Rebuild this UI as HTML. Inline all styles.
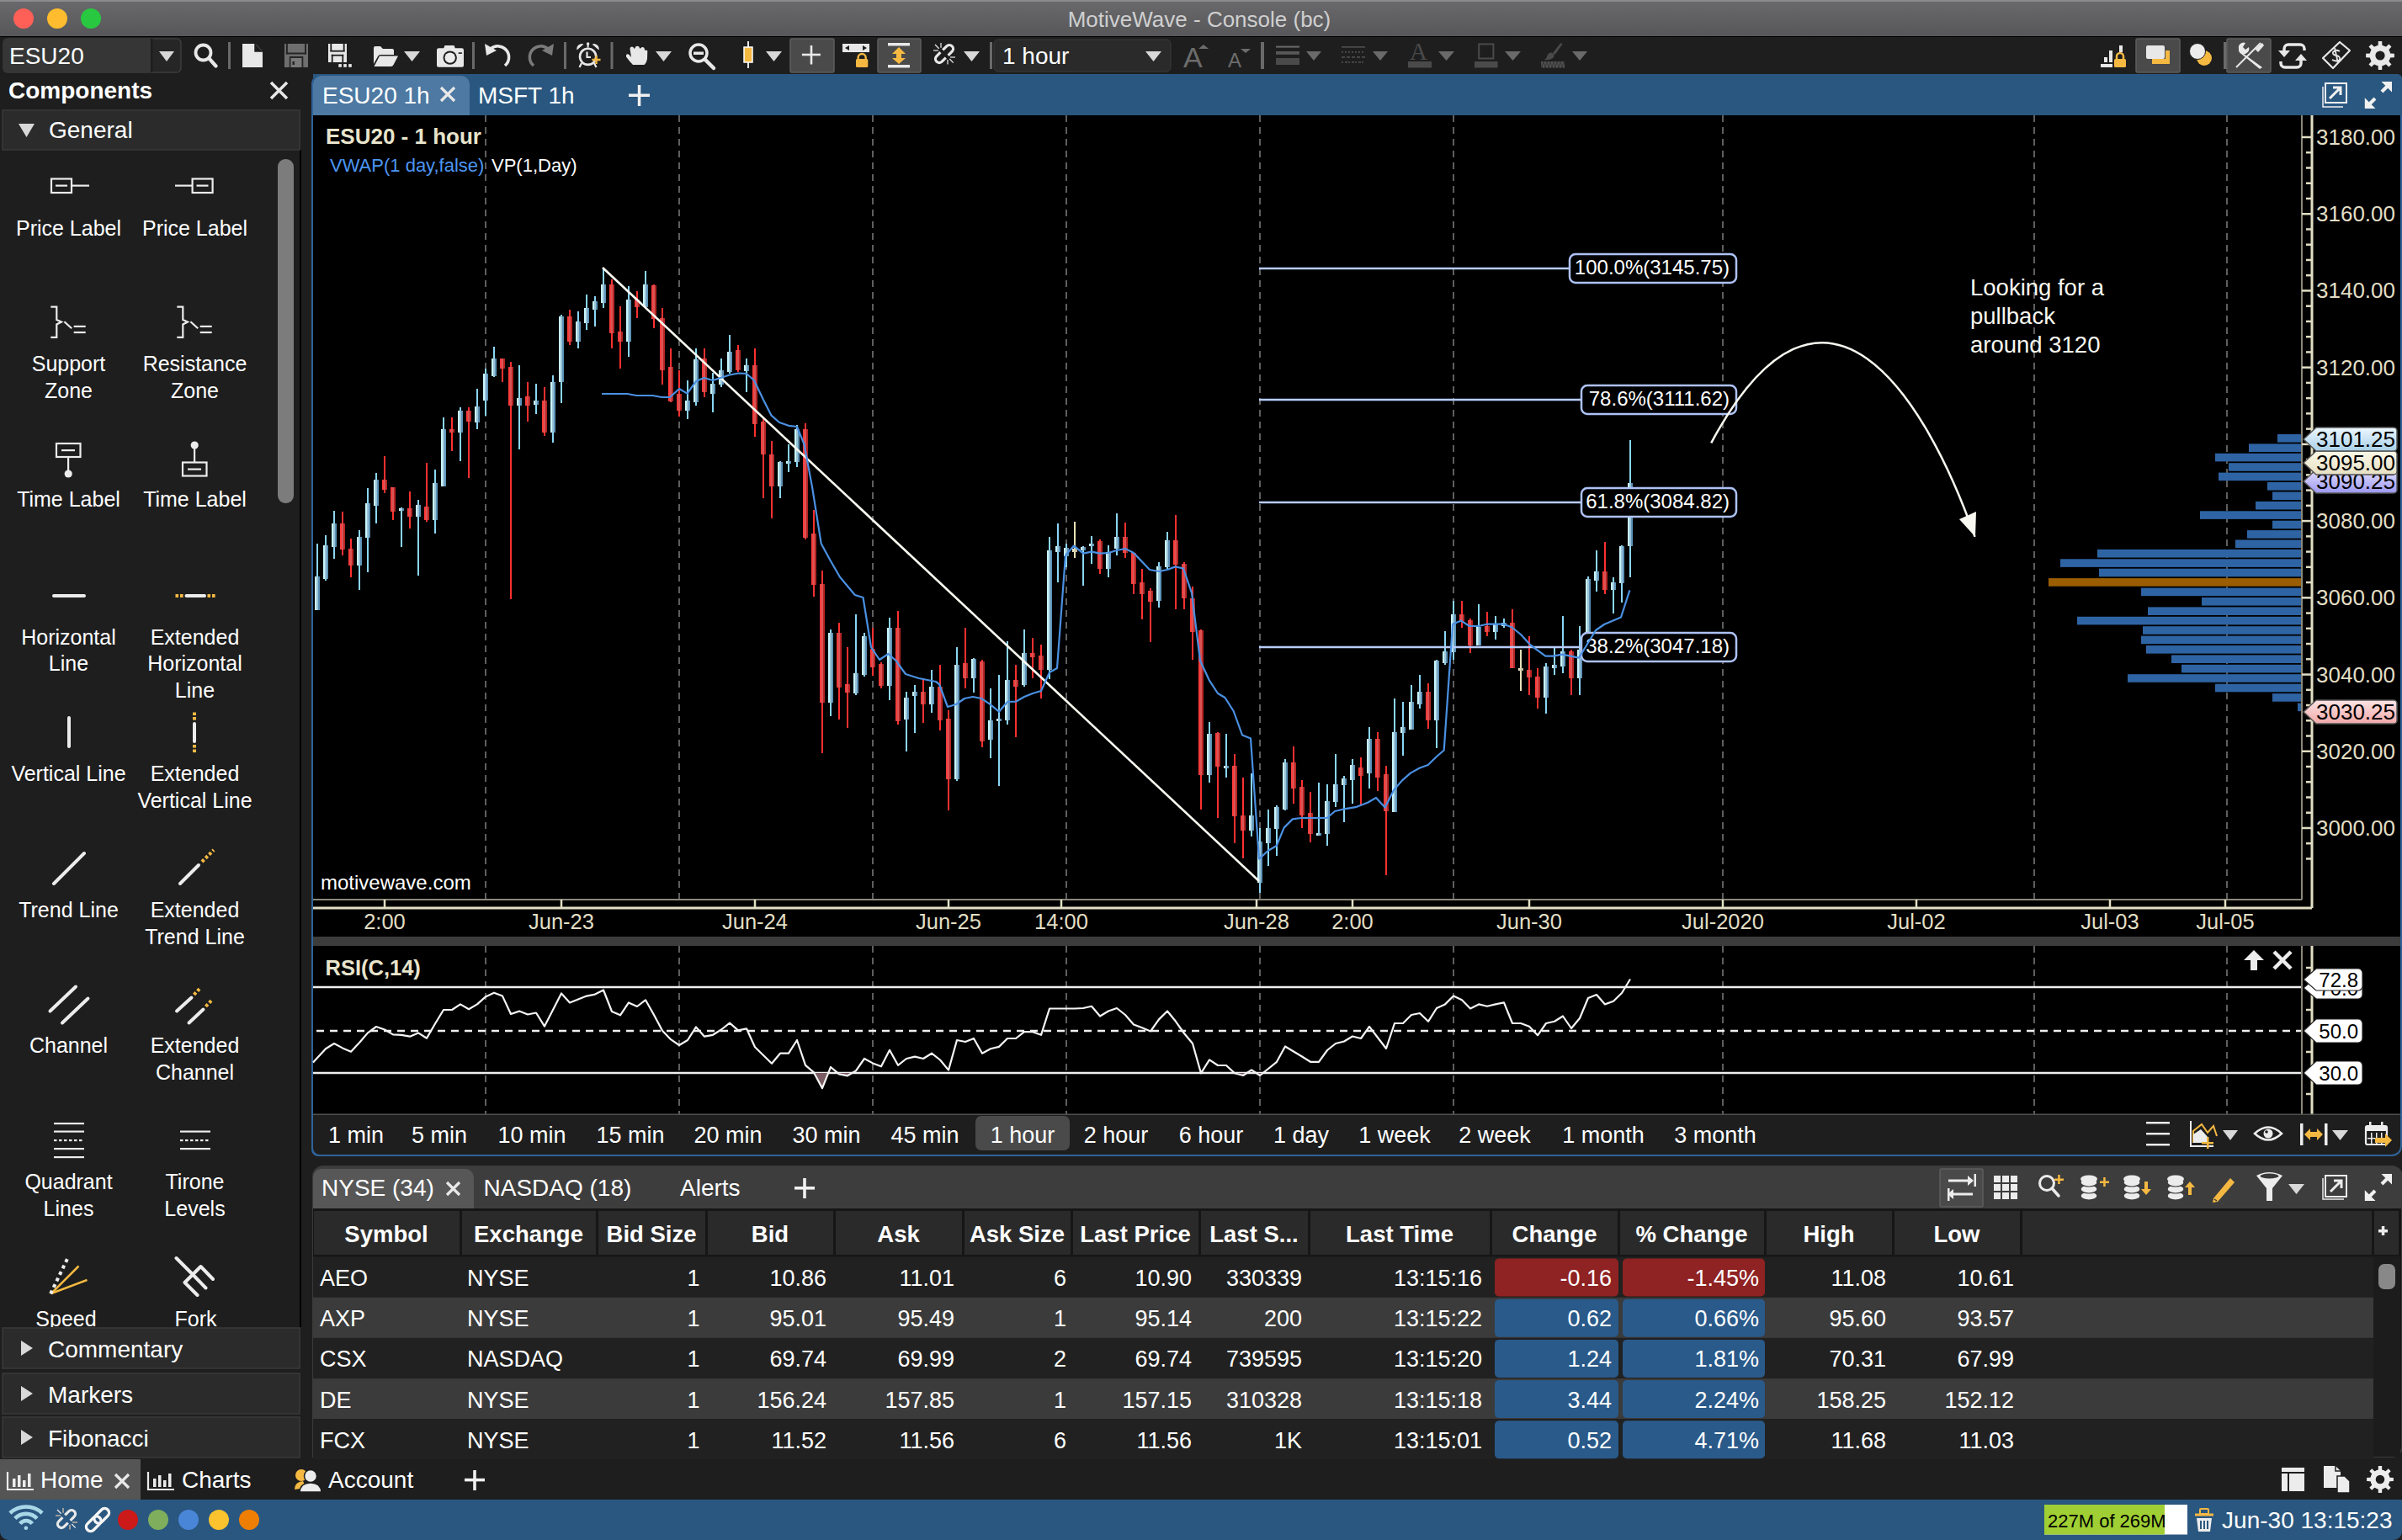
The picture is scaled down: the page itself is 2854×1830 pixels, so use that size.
<!DOCTYPE html><html><head><meta charset="utf-8"><style>html,body{margin:0;padding:0;width:2854px;height:1830px;overflow:hidden;background:#1e1e1e}svg{display:block;font-family:"Liberation Sans",sans-serif}</style></head><body><svg width="2854" height="1830" viewBox="0 0 2854 1830"><defs><linearGradient id="tb" x1="0" y1="0" x2="0" y2="1"><stop offset="0" stop-color="#6a6a6d"/><stop offset="1" stop-color="#57575a"/></linearGradient><linearGradient id="cb" x1="0" y1="0" x2="1" y2="0"><stop offset="0" stop-color="#c8f6ff"/><stop offset="0.34" stop-color="#c8f6ff"/><stop offset="0.34" stop-color="#9cc4d6"/><stop offset="0.66" stop-color="#9cc4d6"/><stop offset="0.66" stop-color="#5c92b8"/><stop offset="1" stop-color="#5c92b8"/></linearGradient><linearGradient id="cr" x1="0" y1="0" x2="1" y2="0"><stop offset="0" stop-color="#ff3c3c"/><stop offset="0.34" stop-color="#ff3c3c"/><stop offset="0.34" stop-color="#d85454"/><stop offset="0.66" stop-color="#d85454"/><stop offset="0.66" stop-color="#b82424"/><stop offset="1" stop-color="#b82424"/></linearGradient><linearGradient id="cy" x1="0" y1="0" x2="1" y2="0"><stop offset="0" stop-color="#f4eed0"/><stop offset="1" stop-color="#b8b090"/></linearGradient><linearGradient id="lb1" x1="0" y1="0" x2="0" y2="1"><stop offset="0" stop-color="#eef8ff"/><stop offset="1" stop-color="#a8d0e8"/></linearGradient><linearGradient id="lb2" x1="0" y1="0" x2="0" y2="1"><stop offset="0" stop-color="#fbf8e8"/><stop offset="1" stop-color="#e6e0c4"/></linearGradient><linearGradient id="lb3" x1="0" y1="0" x2="0" y2="1"><stop offset="0" stop-color="#e4e0ff"/><stop offset="1" stop-color="#9c98f0"/></linearGradient><linearGradient id="lb4" x1="0" y1="0" x2="0" y2="1"><stop offset="0" stop-color="#fde4e4"/><stop offset="1" stop-color="#f0a8a8"/></linearGradient></defs>
<rect x="0" y="0" width="2854" height="1830" fill="#1e1e1e" rx="0" />
<rect x="0" y="0" width="2854" height="43" fill="url(#tb)" rx="0" />
<rect x="0" y="0" width="2854" height="2" fill="#8c8c8f" rx="0" />
<rect x="0" y="43" width="2854" height="1" fill="#000" rx="0" />
<circle cx="28" cy="22" r="12" fill="#fe5f57"/>
<circle cx="68" cy="22" r="12" fill="#febc2e"/>
<circle cx="108" cy="22" r="12" fill="#28c840"/>
<text x="1425" y="32" font-size="26" fill="#cfcfcf" text-anchor="middle" font-weight="normal" >MotiveWave - Console (bc)</text>
<rect x="0" y="44" width="2854" height="44" fill="#1e1e1e" rx="0" />
<rect x="4" y="46" width="211" height="40" fill="#262626" rx="5" stroke="#3c3c3c" stroke-width="1.5"/>
<rect x="4" y="46" width="175" height="40" fill="#363636" rx="3" />
<rect x="179" y="46" width="2.5" height="40" fill="#1e1e1e" rx="0" />
<text x="11" y="76" font-size="28" fill="#fff" text-anchor="start" font-weight="normal" >ESU20</text>
<path d="M189,61 L207,61 L198.0,73 Z" fill="#d8d8d8" stroke="none" stroke-width="2" />
<circle cx="241.5" cy="62.5" r="9" fill="none" stroke="#e8e8e8" stroke-width="3.8"/>
<line x1="248.5" y1="69.5" x2="256.5" y2="78.5" stroke="#e8e8e8" stroke-width="4.2" stroke-linecap="round"/>
<rect x="271" y="50" width="3" height="32" fill="#6a6a6a" rx="0" />
<path d="M288,52 L303,52 L312,61 L312,80 L288,80 Z" fill="#e8e8e8" stroke="none" stroke-width="2" />
<path d="M303,52 L303,61 L312,61" fill="#1e1e1e" stroke="#1e1e1e" stroke-width="1.5" />
<rect x="338" y="52" width="28" height="28" fill="#6e6e6e" rx="0" />
<rect x="339.9" y="52" width="2" height="12.5" fill="#262626" rx="0" />
<rect x="362" y="52" width="2" height="12.5" fill="#262626" rx="0" />
<rect x="339.9" y="62.5" width="24.1" height="2" fill="#262626" rx="0" />
<rect x="343.8" y="67" width="16.5" height="13" fill="#262626" rx="0" />
<rect x="345.5" y="69" width="13" height="11" fill="#7a7a7a" rx="0" />
<rect x="347.5" y="73" width="2.5" height="4" fill="#262626" rx="0" />
<rect x="390" y="52" width="22" height="22" fill="#e8e8e8" rx="0" />
<rect x="392.4" y="52" width="1.8" height="9" fill="#1e1e1e" rx="0" />
<rect x="407.8" y="52" width="1.8" height="9" fill="#1e1e1e" rx="0" />
<rect x="392.4" y="59.8" width="17.2" height="1.8" fill="#1e1e1e" rx="0" />
<rect x="393.8" y="64.8" width="1.8" height="9.2" fill="#1e1e1e" rx="0" />
<rect x="406.4" y="64.8" width="1.8" height="9.2" fill="#1e1e1e" rx="0" />
<rect x="393.8" y="64.8" width="14.4" height="1.8" fill="#1e1e1e" rx="0" />
<rect x="402.3" y="76.1" width="3.6" height="3.7" fill="#e8e8e8" rx="0" />
<rect x="408.2" y="76.1" width="3.6" height="3.7" fill="#e8e8e8" rx="0" />
<rect x="414.2" y="76.1" width="3.6" height="3.7" fill="#e8e8e8" rx="0" />
<path d="M444,57 Q444,55 446,55 L452,55 L455,58 L466,58 Q468,58 468,60 L468,65 L452,65 Q450,65 449,67 L444,76 Z" fill="#e8e8e8" stroke="none" stroke-width="2" />
<path d="M451,66.5 L473,66.5 L467.5,77 Q466.5,79 464.5,79 L444.5,79 Z" fill="#e8e8e8" stroke="none" stroke-width="2" />
<path d="M480,61 L499,61 L489.5,73 Z" fill="#d8d8d8" stroke="none" stroke-width="2" />
<path d="M519,59.5 Q519,57.3 521.2,57.3 L527.2,57.3 L528.5,54 L539.5,54 L540.8,57.3 L548.8,57.3 Q551,57.3 551,59.5 L551,77.8 Q551,79.8 549,79.8 L521,79.8 Q519,79.8 519,77.8 Z" fill="#e8e8e8" stroke="none" stroke-width="2" />
<circle cx="534.7" cy="68.6" r="8.2" fill="#1e1e1e"/><circle cx="534.7" cy="68.6" r="6.2" fill="#ececec"/>
<rect x="544.7" y="62.3" width="4.2" height="1.6" fill="#1e1e1e" rx="0" />
<rect x="561" y="50" width="3" height="32" fill="#6a6a6a" rx="0" />
<path d="M583,58 A12,12 0 1 1 600,78" fill="none" stroke="#e8e8e8" stroke-width="3.5" />
<path d="M576,52 L578,66 L590,60 Z" fill="#e8e8e8" stroke="none" stroke-width="2" />
<path d="M651,58 A12,12 0 1 0 634,78" fill="none" stroke="#7a7a7a" stroke-width="3.5" />
<path d="M658,52 L656,66 L644,60 Z" fill="#7a7a7a" stroke="none" stroke-width="2" />
<rect x="670" y="50" width="3" height="32" fill="#6a6a6a" rx="0" />
<path d="M685.5,59.5 A6,6 0 0 1 693.5,52.5 Z M711.5,59.5 A6,6 0 0 0 703.5,52.5 Z" fill="#e8e8e8" stroke="none" stroke-width="2" />
<circle cx="698.6" cy="67.3" r="9.6" fill="none" stroke="#e8e8e8" stroke-width="2.6"/>
<rect x="697.6" y="51.5" width="2" height="5" fill="#e8e8e8" rx="0" />
<circle cx="698.6" cy="52" r="1.8" fill="#e8e8e8"/>
<path d="M691,75 L688.5,80 M706,75 L708.5,80" fill="none" stroke="#e8e8e8" stroke-width="2.2" />
<path d="M697.5,61.5 L697.5,68 L702,68" fill="none" stroke="#e8e8e8" stroke-width="2.2" />
<path d="M703.5,71 L713.5,71 M708.5,66 L708.5,76" fill="none" stroke="#f5b942" stroke-width="2.4" />
<rect x="725.5" y="50" width="3" height="32" fill="#6a6a6a" rx="0" />
<path d="M744,65.5 Q745,63.5 747.5,65 L750,68 L748.5,58 Q748.5,55.5 751,55.5 Q753,55.5 753.5,58 L754.5,57 Q755,54.5 757.5,54.7 Q760,55 760,57.5 L761,57.5 Q762,55.5 764,56 Q766,56.5 766,59 L766.5,60 Q768,59 769.3,60.5 L769,70 Q768,75 765.5,77 L752,77 Q748,73 744,67.5 Z" fill="#e8e8e8" stroke="none" stroke-width="2" />
<path d="M779,61 L798,61 L788.5,73 Z" fill="#d8d8d8" stroke="none" stroke-width="2" />
<circle cx="830" cy="63" r="10" fill="none" stroke="#e8e8e8" stroke-width="3.5"/>
<rect x="824" y="61.5" width="12" height="3.5" fill="#e8e8e8" rx="0" />
<line x1="838" y1="71" x2="848" y2="81" stroke="#e8e8e8" stroke-width="4.5" stroke-linecap="round"/>
<rect x="888" y="49" width="2" height="32" fill="#e8e8e8" rx="0" />
<rect x="884" y="56" width="10" height="18" fill="#f5b942" rx="0" stroke="#fff" stroke-width="1.5"/>
<path d="M910,61 L929,61 L919.5,73 Z" fill="#d8d8d8" stroke="none" stroke-width="2" />
<rect x="939" y="46" width="52" height="40" fill="#4a4a4a" rx="2" stroke="#5e5e5e" stroke-width="1.5"/>
<rect x="962.7" y="54" width="2.6" height="22.5" fill="#e8e8e8" rx="0" />
<rect x="952.9" y="63.7" width="22" height="2.6" fill="#e8e8e8" rx="0" />
<rect x="1001" y="52" width="32" height="10" fill="#e8e8e8" rx="0" />
<path d="M1004,57 L1009,54 L1009,60 Z M1030,57 L1025,54 L1025,60 Z" fill="#1e1e1e" stroke="none" stroke-width="2" />
<rect x="1017" y="70" width="14.3" height="10" fill="#f5b942" rx="1.5" />
<path d="M1019.6,70.5 L1019.6,68.5 A4.55,4.55 0 0 1 1028.7,68.5 L1028.7,70.5" fill="none" stroke="#f5b942" stroke-width="2.4" />
<rect x="1043" y="46" width="51" height="40" fill="#4a4a4a" rx="2" stroke="#5e5e5e" stroke-width="1.5"/>
<rect x="1055" y="51" width="26" height="3.5" fill="#e8e8e8" rx="0" />
<rect x="1055" y="77" width="26" height="3.5" fill="#e8e8e8" rx="0" />
<path d="M1068,56 L1076,64 L1071,64 L1071,69 L1076,69 L1068,76 L1060,69 L1065,69 L1065,64 L1060,64 Z" fill="#f5b942" stroke="none" stroke-width="2" />
<path d="M1120.2,59.4 L1124.8,54.8 A4.5,4.5 0 0 1 1131.2,61.2 L1126.6,65.8" fill="none" stroke="#e8e8e8" stroke-width="3.2" />
<path d="M1123.8,68.6 L1119.2,73.2 A4.5,4.5 0 0 1 1112.8,66.8 L1117.4,62.2" fill="none" stroke="#e8e8e8" stroke-width="3.2" />
<path d="M1118,51 L1118,56.8 M1109,59.9 L1115,59.9 M1126,71 L1126,76.6 M1129,68 L1135,68" fill="none" stroke="#9a9a9a" stroke-width="2" />
<path d="M1111,53 L1115.7,57.7 M1128.3,70 L1132.7,74.6" fill="none" stroke="#e8e8e8" stroke-width="1.3" />
<path d="M1145,61 L1164,61 L1154.5,73 Z" fill="#d8d8d8" stroke="none" stroke-width="2" />
<rect x="1176" y="50" width="3" height="32" fill="#6a6a6a" rx="0" />
<rect x="1181" y="47" width="210" height="38" fill="#2a2a2a" rx="5" stroke="#3a3a3a" stroke-width="1"/>
<text x="1191" y="76" font-size="28" fill="#fff" text-anchor="start" font-weight="normal" >1 hour</text>
<path d="M1361,61 L1380,61 L1370.5,73 Z" fill="#d8d8d8" stroke="none" stroke-width="2" />
<text x="1406" y="80" font-size="34" fill="#6c6c6c" text-anchor="start" font-weight="normal" >A</text>
<path d="M1424,58 L1430,53 L1436,58 Z" fill="#6c6c6c" stroke="none" stroke-width="2" />
<text x="1459" y="80" font-size="24" fill="#6c6c6c" text-anchor="start" font-weight="normal" >A</text>
<path d="M1474,58 L1480,63 L1486,58 Z" fill="#6c6c6c" stroke="none" stroke-width="2" />
<rect x="1498" y="50" width="4" height="32" fill="#6a6a6a" rx="0" />
<rect x="1516" y="54.6" width="28" height="2" fill="#6a6a6a" rx="0" />
<rect x="1516" y="61" width="28" height="3.8" fill="#585858" rx="0" />
<rect x="1516" y="69" width="28" height="8" fill="#4a4a4a" rx="0" />
<path d="M1552,61 L1570,61 L1561.0,72 Z" fill="#6a6a6a" stroke="none" stroke-width="2" />
<rect x="1594" y="55" width="28" height="1.8" fill="#4a4a4a" rx="0" />
<rect x="1594" y="61" width="2" height="1.8" fill="#4a4a4a" rx="0" />
<rect x="1598" y="61" width="2" height="1.8" fill="#4a4a4a" rx="0" />
<rect x="1602" y="61" width="2" height="1.8" fill="#4a4a4a" rx="0" />
<rect x="1606" y="61" width="2" height="1.8" fill="#4a4a4a" rx="0" />
<rect x="1610" y="61" width="2" height="1.8" fill="#4a4a4a" rx="0" />
<rect x="1614" y="61" width="2" height="1.8" fill="#4a4a4a" rx="0" />
<rect x="1618" y="61" width="2" height="1.8" fill="#4a4a4a" rx="0" />
<rect x="1594" y="67" width="4" height="1.8" fill="#4a4a4a" rx="0" />
<rect x="1600" y="67" width="4" height="1.8" fill="#4a4a4a" rx="0" />
<rect x="1606" y="67" width="4" height="1.8" fill="#4a4a4a" rx="0" />
<rect x="1612" y="67" width="4" height="1.8" fill="#4a4a4a" rx="0" />
<rect x="1618" y="67" width="4" height="1.8" fill="#4a4a4a" rx="0" />
<rect x="1594" y="73" width="2" height="1.8" fill="#4a4a4a" rx="0" />
<rect x="1598" y="73" width="3" height="1.8" fill="#4a4a4a" rx="0" />
<rect x="1602" y="73" width="2" height="1.8" fill="#4a4a4a" rx="0" />
<rect x="1606" y="73" width="3" height="1.8" fill="#4a4a4a" rx="0" />
<rect x="1610" y="73" width="2" height="1.8" fill="#4a4a4a" rx="0" />
<rect x="1614" y="73" width="3" height="1.8" fill="#4a4a4a" rx="0" />
<rect x="1618" y="73" width="2" height="1.8" fill="#4a4a4a" rx="0" />
<path d="M1631,61 L1649,61 L1640.0,72 Z" fill="#6a6a6a" stroke="none" stroke-width="2" />
<text x="1685.6" y="71.2" font-size="29" fill="#4a4a4a" text-anchor="middle" font-weight="normal" font-family="Liberation Serif">A</text>
<rect x="1673" y="73" width="28" height="7.5" fill="#4a4a4a" rx="0" />
<path d="M1709,61 L1728,61 L1718.5,72 Z" fill="#6a6a6a" stroke="none" stroke-width="2" />
<rect x="1757.2" y="52.4" width="17.2" height="17.1" fill="none" rx="0" stroke="#4a4a4a" stroke-width="2"/>
<rect x="1752" y="73" width="27.6" height="7.5" fill="#4a4a4a" rx="0" />
<path d="M1788,61 L1807,61 L1797.5,72 Z" fill="#6a6a6a" stroke="none" stroke-width="2" />
<path d="M1845,63 L1853.5,52 Q1855.5,50.5 1856.5,52.5 L1847.5,65 Z" fill="#4a4a4a" stroke="none" stroke-width="2" />
<path d="M1843.5,62.5 Q1848,64.5 1846,68 Q1842,72 1835,71 Q1838,69 1838.5,66 Q1839.5,62.5 1843.5,62.5 Z" fill="#4a4a4a" stroke="none" stroke-width="2" />
<rect x="1831" y="73" width="2" height="3.7" fill="#454545" rx="0" />
<rect x="1833" y="76.7" width="2" height="3.7" fill="#454545" rx="0" />
<rect x="1835" y="73" width="2" height="3.7" fill="#454545" rx="0" />
<rect x="1837" y="76.7" width="2" height="3.7" fill="#454545" rx="0" />
<rect x="1839" y="73" width="2" height="3.7" fill="#454545" rx="0" />
<rect x="1841" y="76.7" width="2" height="3.7" fill="#454545" rx="0" />
<rect x="1843" y="73" width="2" height="3.7" fill="#454545" rx="0" />
<rect x="1845" y="76.7" width="2" height="3.7" fill="#454545" rx="0" />
<rect x="1847" y="73" width="2" height="3.7" fill="#454545" rx="0" />
<rect x="1849" y="76.7" width="2" height="3.7" fill="#454545" rx="0" />
<rect x="1851" y="73" width="2" height="3.7" fill="#454545" rx="0" />
<rect x="1853" y="76.7" width="2" height="3.7" fill="#454545" rx="0" />
<rect x="1855" y="73" width="2" height="3.7" fill="#454545" rx="0" />
<rect x="1857" y="76.7" width="2" height="3.7" fill="#454545" rx="0" />
<rect x="1831" y="73" width="28" height="7.5" fill="#3a3a3a" rx="0" />
<rect x="1831" y="73" width="2" height="3.7" fill="#505050" rx="0" />
<rect x="1833" y="76.7" width="2" height="3.7" fill="#505050" rx="0" />
<rect x="1835" y="73" width="2" height="3.7" fill="#505050" rx="0" />
<rect x="1837" y="76.7" width="2" height="3.7" fill="#505050" rx="0" />
<rect x="1839" y="73" width="2" height="3.7" fill="#505050" rx="0" />
<rect x="1841" y="76.7" width="2" height="3.7" fill="#505050" rx="0" />
<rect x="1843" y="73" width="2" height="3.7" fill="#505050" rx="0" />
<rect x="1845" y="76.7" width="2" height="3.7" fill="#505050" rx="0" />
<rect x="1847" y="73" width="2" height="3.7" fill="#505050" rx="0" />
<rect x="1849" y="76.7" width="2" height="3.7" fill="#505050" rx="0" />
<rect x="1851" y="73" width="2" height="3.7" fill="#505050" rx="0" />
<rect x="1853" y="76.7" width="2" height="3.7" fill="#505050" rx="0" />
<rect x="1855" y="73" width="2" height="3.7" fill="#505050" rx="0" />
<rect x="1857" y="76.7" width="2" height="3.7" fill="#505050" rx="0" />
<path d="M1868,61 L1886,61 L1877.0,72 Z" fill="#6a6a6a" stroke="none" stroke-width="2" />
<rect x="2496" y="76" width="14" height="4" fill="#e8e8e8" rx="0" />
<rect x="2500" y="68" width="4" height="6" fill="#e8e8e8" rx="0" />
<rect x="2506" y="60" width="4" height="14" fill="#e8e8e8" rx="0" />
<rect x="2518" y="54" width="4" height="8" fill="#e8e8e8" rx="0" />
<rect x="2512" y="70" width="14" height="10" fill="#f5b942" rx="1.5" />
<path d="M2515,70 L2515,67 A4,4 0 0 1 2523,67 L2523,70" fill="none" stroke="#f5b942" stroke-width="2.5" />
<rect x="2538" y="46" width="52" height="40" fill="#4a4a4a" rx="2" stroke="#5e5e5e" stroke-width="1.5"/>
<path d="M2557,70 L2573,70 L2573,60 L2578,60 L2578,76 L2557,76 Z" fill="#f5b942" stroke="none" stroke-width="2" />
<rect x="2550" y="54" width="22" height="16" fill="#e8e8e8" rx="2" />
<circle cx="2619" cy="69" r="9" fill="#f5b942"/><circle cx="2611" cy="61" r="9.5" fill="#ececec" stroke="#1e1e1e" stroke-width="1"/>
<rect x="2642" y="50" width="4" height="32" fill="#6a6a6a" rx="0" />
<rect x="2646" y="46" width="52" height="40" fill="#4a4a4a" rx="2" stroke="#5e5e5e" stroke-width="1.5"/>
<path d="M2657,80 L2686,51" fill="none" stroke="#e8e8e8" stroke-width="2" />
<path d="M2679,58 L2688,51 L2690,54 L2683,62 Z" fill="#e8e8e8" stroke="none" stroke-width="2" />
<path d="M2660,58 A6,6 0 0 1 2668,51 L2665,56 L2668,59 L2672,56 A6,6 0 0 1 2666,64 L2688,80 L2685,82 L2663,64 A6,6 0 0 1 2660,58 Z" fill="#e8e8e8" stroke="none" stroke-width="2" />
<path d="M2714,62 L2714,58 A5,5 0 0 1 2719,53 L2733,53 A5,5 0 0 1 2738,58 L2738,60" fill="none" stroke="#e8e8e8" stroke-width="3.5" />
<path d="M2707,60 L2721,60 L2714,68 Z" fill="#e8e8e8" stroke="none" stroke-width="2" />
<path d="M2734,70 L2734,75 A5,5 0 0 1 2729,80 L2715,80 A5,5 0 0 1 2710,75 L2710,73" fill="none" stroke="#e8e8e8" stroke-width="3.5" />
<path d="M2727,72 L2741,72 L2734,64 Z" fill="#e8e8e8" stroke="none" stroke-width="2" />
<path d="M2760,69 L2780,50 L2792,60 L2772,81 Z" fill="none" stroke="#e8e8e8" stroke-width="2.2" stroke-linejoin="round"/>
<path d="M2780,61 Q2775,58 2772,62 Q2771,65 2776,66 Q2781,67 2780,71 Q2777,74 2771,71 M2774,57 L2778,75" fill="none" stroke="#e8e8e8" stroke-width="1.8" />
<path d="M2840.0,63.6 L2844.9,63.8 L2844.9,68.2 L2840.0,68.4 L2838.2,72.8 L2841.5,76.4 L2838.4,79.5 L2834.8,76.2 L2830.4,78.0 L2830.2,82.9 L2825.8,82.9 L2825.6,78.0 L2821.2,76.2 L2817.6,79.5 L2814.5,76.4 L2817.8,72.8 L2816.0,68.4 L2811.1,68.2 L2811.1,63.8 L2816.0,63.6 L2817.8,59.2 L2814.5,55.6 L2817.6,52.5 L2821.2,55.8 L2825.6,54.0 L2825.8,49.1 L2830.2,49.1 L2830.4,54.0 L2834.8,55.8 L2838.4,52.5 L2841.5,55.6 L2838.2,59.2 Z" fill="#e8e8e8" stroke="none" stroke-width="2" />
<circle cx="2828" cy="66" r="12.24" fill="#e8e8e8"/><circle cx="2828" cy="66" r="5.61" fill="#1e1e1e"/>
<rect x="0" y="88" width="356" height="1646" fill="#1e1e1e" rx="0" />
<rect x="356" y="88" width="14" height="1646" fill="#1e1e1e" rx="0" />
<rect x="356" y="178" width="2" height="1399" fill="#000" rx="0" />
<text x="10" y="117" font-size="28" fill="#fff" text-anchor="start" font-weight="bold" >Components</text>
<path d="M322,98 L341,117 M341,98 L322,117" fill="none" stroke="#e8e8e8" stroke-width="3.5" />
<rect x="3" y="131" width="353" height="47" fill="#2b2b2b" rx="0" stroke="#3a3a3a" stroke-width="1.5"/>
<path d="M22,147 L41,147 L31.5,163 Z" fill="#d8d8d8" stroke="none" stroke-width="2" />
<text x="58" y="164" font-size="28" fill="#fff" text-anchor="start" font-weight="normal" >General</text>
<rect x="330" y="189" width="19" height="409" fill="#7c7c7c" rx="9" />
<rect x="61" y="212.5" width="24" height="16.5" fill="none" rx="0" stroke="#ececec" stroke-width="2.2"/>
<rect x="66" y="219.5" width="14" height="2.2" fill="#ececec" rx="0" />
<rect x="85" y="219.5" width="21" height="2.2" fill="#ececec" rx="0" />
<rect x="228.6" y="212.5" width="24" height="16.5" fill="none" rx="0" stroke="#ececec" stroke-width="2.2"/>
<rect x="233.5" y="219.5" width="14" height="2.2" fill="#ececec" rx="0" />
<rect x="208" y="219.5" width="21" height="2.2" fill="#ececec" rx="0" />
<text x="81.5" y="280.0" font-size="25" fill="#fff" text-anchor="middle" font-weight="normal" >Price Label</text>
<text x="231.5" y="280.0" font-size="25" fill="#fff" text-anchor="middle" font-weight="normal" >Price Label</text>
<path d="M60.3,364.7 L67.3,364.7 L67.3,380 L73,382.5 L67.3,385.5 L67.3,400.8 L60.3,400.8" fill="none" stroke="#ececec" stroke-width="2.2" />
<line x1="76.4" y1="382.3" x2="85.2" y2="390.3" stroke="#ececec" stroke-width="2.2" />
<rect x="87.7" y="386.8" width="14" height="2.2" fill="#ececec" rx="0" />
<rect x="87.7" y="393.9" width="14" height="2.2" fill="#ececec" rx="0" />
<path d="M210.3,364.7 L217.3,364.7 L217.3,380 L223,382.5 L217.3,385.5 L217.3,400.8 L210.3,400.8" fill="none" stroke="#ececec" stroke-width="2.2" />
<line x1="226.4" y1="382.3" x2="235.2" y2="390.3" stroke="#ececec" stroke-width="2.2" />
<rect x="237.7" y="386.8" width="14" height="2.2" fill="#ececec" rx="0" />
<rect x="237.7" y="393.9" width="14" height="2.2" fill="#ececec" rx="0" />
<text x="81.5" y="441.0" font-size="25" fill="#fff" text-anchor="middle" font-weight="normal" >Support</text>
<text x="81.5" y="472.7" font-size="25" fill="#fff" text-anchor="middle" font-weight="normal" >Zone</text>
<text x="231.5" y="441.0" font-size="25" fill="#fff" text-anchor="middle" font-weight="normal" >Resistance</text>
<text x="231.5" y="472.7" font-size="25" fill="#fff" text-anchor="middle" font-weight="normal" >Zone</text>
<rect x="67" y="527" width="28.5" height="16" fill="none" rx="0" stroke="#ececec" stroke-width="2.2"/>
<rect x="73" y="534" width="16" height="2.2" fill="#ececec" rx="0" />
<rect x="80" y="543" width="2.2" height="16" fill="#ececec" rx="0" />
<circle cx="81.2" cy="563" r="4.6" fill="#ececec"/>
<rect x="217" y="549.5" width="28.5" height="16" fill="none" rx="0" stroke="#ececec" stroke-width="2.2"/>
<rect x="223" y="556.5" width="16" height="2.2" fill="#ececec" rx="0" />
<rect x="230" y="533" width="2.2" height="16" fill="#ececec" rx="0" />
<circle cx="231.2" cy="529" r="4.6" fill="#ececec"/>
<text x="81.5" y="602.0" font-size="25" fill="#fff" text-anchor="middle" font-weight="normal" >Time Label</text>
<text x="231.5" y="602.0" font-size="25" fill="#fff" text-anchor="middle" font-weight="normal" >Time Label</text>
<line x1="64" y1="708" x2="100" y2="708" stroke="#ececec" stroke-width="4" stroke-linecap="round"/>
<rect x="208.5" y="706" width="3.6" height="4" fill="#f5b942" rx="0" />
<rect x="214" y="706" width="3.6" height="4" fill="#f5b942" rx="0" />
<rect x="246.5" y="706" width="3.6" height="4" fill="#f5b942" rx="0" />
<rect x="252" y="706" width="3.6" height="4" fill="#f5b942" rx="0" />
<line x1="221.5" y1="708" x2="243" y2="708" stroke="#ececec" stroke-width="4" stroke-linecap="round"/>
<text x="81.5" y="765.5" font-size="25" fill="#fff" text-anchor="middle" font-weight="normal" >Horizontal</text>
<text x="81.5" y="797.2" font-size="25" fill="#fff" text-anchor="middle" font-weight="normal" >Line</text>
<text x="231.5" y="765.5" font-size="25" fill="#fff" text-anchor="middle" font-weight="normal" >Extended</text>
<text x="231.5" y="797.2" font-size="25" fill="#fff" text-anchor="middle" font-weight="normal" >Horizontal</text>
<text x="231.5" y="828.9" font-size="25" fill="#fff" text-anchor="middle" font-weight="normal" >Line</text>
<line x1="82" y1="853" x2="82" y2="887" stroke="#ececec" stroke-width="4" stroke-linecap="round"/>
<rect x="229" y="846.5" width="4" height="3.6" fill="#f5b942" rx="0" />
<rect x="229" y="852" width="4" height="3.6" fill="#f5b942" rx="0" />
<rect x="229" y="885" width="4" height="3.6" fill="#f5b942" rx="0" />
<rect x="229" y="890.5" width="4" height="3.6" fill="#f5b942" rx="0" />
<line x1="231" y1="860" x2="231" y2="881" stroke="#ececec" stroke-width="4" stroke-linecap="round"/>
<text x="81.5" y="928.0" font-size="25" fill="#fff" text-anchor="middle" font-weight="normal" >Vertical Line</text>
<text x="231.5" y="928.0" font-size="25" fill="#fff" text-anchor="middle" font-weight="normal" >Extended</text>
<text x="231.5" y="959.7" font-size="25" fill="#fff" text-anchor="middle" font-weight="normal" >Vertical Line</text>
<line x1="64" y1="1050" x2="100" y2="1014" stroke="#ececec" stroke-width="4" stroke-linecap="round"/>
<line x1="214" y1="1050" x2="236" y2="1028" stroke="#ececec" stroke-width="4" stroke-linecap="round"/>
<line x1="240" y1="1024" x2="254" y2="1010" stroke="#f5b942" stroke-width="4" stroke-dasharray="3.5 2.5"/>
<text x="81.5" y="1090.0" font-size="25" fill="#fff" text-anchor="middle" font-weight="normal" >Trend Line</text>
<text x="231.5" y="1090.0" font-size="25" fill="#fff" text-anchor="middle" font-weight="normal" >Extended</text>
<text x="231.5" y="1121.7" font-size="25" fill="#fff" text-anchor="middle" font-weight="normal" >Trend Line</text>
<line x1="59.5" y1="1201.5" x2="90" y2="1172.5" stroke="#ececec" stroke-width="4" stroke-linecap="round"/>
<line x1="74" y1="1215.5" x2="104.5" y2="1186.5" stroke="#ececec" stroke-width="4" stroke-linecap="round"/>
<line x1="210" y1="1201.5" x2="227.5" y2="1185.5" stroke="#ececec" stroke-width="4" stroke-linecap="round"/>
<line x1="230.5" y1="1182" x2="238.5" y2="1173.5" stroke="#f5b942" stroke-width="4" stroke-dasharray="3.5 2.5"/>
<line x1="224.5" y1="1215.5" x2="241.5" y2="1199.5" stroke="#ececec" stroke-width="4" stroke-linecap="round"/>
<line x1="244.5" y1="1196" x2="252.5" y2="1187.5" stroke="#f5b942" stroke-width="4" stroke-dasharray="3.5 2.5"/>
<text x="81.5" y="1251.0" font-size="25" fill="#fff" text-anchor="middle" font-weight="normal" >Channel</text>
<text x="231.5" y="1251.0" font-size="25" fill="#fff" text-anchor="middle" font-weight="normal" >Extended</text>
<text x="231.5" y="1282.7" font-size="25" fill="#fff" text-anchor="middle" font-weight="normal" >Channel</text>
<rect x="64" y="1334" width="36" height="2.2" fill="#ececec" rx="0" />
<rect x="64" y="1343.5" width="36" height="2.2" fill="#ececec" rx="0" />
<rect x="64" y="1364" width="36" height="2.2" fill="#ececec" rx="0" />
<rect x="64" y="1374" width="36" height="2.2" fill="#ececec" rx="0" />
<rect x="64" y="1354" width="3.5" height="2.2" fill="#ececec" rx="0" />
<rect x="70" y="1354" width="3.5" height="2.2" fill="#ececec" rx="0" />
<rect x="76" y="1354" width="3.5" height="2.2" fill="#ececec" rx="0" />
<rect x="82" y="1354" width="3.5" height="2.2" fill="#ececec" rx="0" />
<rect x="88" y="1354" width="3.5" height="2.2" fill="#ececec" rx="0" />
<rect x="94" y="1354" width="3.5" height="2.2" fill="#ececec" rx="0" />
<rect x="214" y="1343.5" width="36" height="2.2" fill="#ececec" rx="0" />
<rect x="214" y="1364" width="36" height="2.2" fill="#ececec" rx="0" />
<rect x="214" y="1354" width="3.5" height="2.2" fill="#ececec" rx="0" />
<rect x="220" y="1354" width="3.5" height="2.2" fill="#ececec" rx="0" />
<rect x="226" y="1354" width="3.5" height="2.2" fill="#ececec" rx="0" />
<rect x="232" y="1354" width="3.5" height="2.2" fill="#ececec" rx="0" />
<rect x="238" y="1354" width="3.5" height="2.2" fill="#ececec" rx="0" />
<rect x="244" y="1354" width="3.5" height="2.2" fill="#ececec" rx="0" />
<text x="81.5" y="1413.0" font-size="25" fill="#fff" text-anchor="middle" font-weight="normal" >Quadrant</text>
<text x="81.5" y="1444.7" font-size="25" fill="#fff" text-anchor="middle" font-weight="normal" >Lines</text>
<text x="231.5" y="1413.0" font-size="25" fill="#fff" text-anchor="middle" font-weight="normal" >Tirone</text>
<text x="231.5" y="1444.7" font-size="25" fill="#fff" text-anchor="middle" font-weight="normal" >Levels</text>
<line x1="61" y1="1537" x2="93.5" y2="1504.5" stroke="#f5b942" stroke-width="2.5" />
<line x1="61" y1="1537" x2="103.5" y2="1521" stroke="#f5b942" stroke-width="2.5" />
<rect x="59.0" y="1533.5" width="4" height="4" fill="#ececec" rx="0" transform="rotate(25 61.0 1535.5)"/>
<rect x="62.599999999999994" y="1526.0" width="4" height="4" fill="#ececec" rx="0" transform="rotate(25 64.6 1528.0)"/>
<rect x="66.2" y="1518.5" width="4" height="4" fill="#ececec" rx="0" transform="rotate(25 68.2 1520.5)"/>
<rect x="69.8" y="1511.0" width="4" height="4" fill="#ececec" rx="0" transform="rotate(25 71.8 1513.0)"/>
<rect x="73.4" y="1503.5" width="4" height="4" fill="#ececec" rx="0" transform="rotate(25 75.4 1505.5)"/>
<rect x="77.0" y="1496.0" width="4" height="4" fill="#ececec" rx="0" transform="rotate(25 79.0 1498.0)"/>
<path d="M209.5,1495 L229,1514.5 M219.5,1524 L238.5,1505 M219.5,1524 L234.5,1539 M229,1514.5 L244.5,1530.5 M238.5,1505 L253,1520" fill="none" stroke="#ececec" stroke-width="4" stroke-linecap="round" stroke-linejoin="round"/>
<clipPath id="clipSpeed"><rect x="0" y="1540" width="356" height="37"/></clipPath>
<g clip-path="url(#clipSpeed)">
<text x="78.5" y="1575.5" font-size="25" fill="#fff" text-anchor="middle" font-weight="normal" >Speed</text>
<text x="232.5" y="1575.5" font-size="25" fill="#fff" text-anchor="middle" font-weight="normal" >Fork</text>
</g>
<rect x="3" y="1578" width="353" height="48" fill="#2b2b2b" rx="0" stroke="#3a3a3a" stroke-width="1.5"/>
<path d="M25,1593 L39,1602 L25,1611 Z" fill="#d8d8d8" stroke="none" stroke-width="2" />
<text x="57" y="1613" font-size="28" fill="#fff" text-anchor="start" font-weight="normal" >Commentary</text>
<rect x="3" y="1632" width="353" height="48" fill="#2b2b2b" rx="0" stroke="#3a3a3a" stroke-width="1.5"/>
<path d="M25,1647 L39,1656 L25,1665 Z" fill="#d8d8d8" stroke="none" stroke-width="2" />
<text x="57" y="1667" font-size="28" fill="#fff" text-anchor="start" font-weight="normal" >Markers</text>
<rect x="3" y="1684" width="353" height="48" fill="#2b2b2b" rx="0" stroke="#3a3a3a" stroke-width="1.5"/>
<path d="M25,1699 L39,1708 L25,1717 Z" fill="#d8d8d8" stroke="none" stroke-width="2" />
<text x="57" y="1719" font-size="28" fill="#fff" text-anchor="start" font-weight="normal" >Fibonacci</text>
<path d="M378,1374 A8,8 0 0 1 370,1366 L370,100 A12,12 0 0 1 382,88 L2848,88 A6,6 0 0 1 2854,94 L2854,1362 A12,12 0 0 1 2842,1374 Z" fill="#30649a" stroke="none" stroke-width="2" />
<path d="M372,137 L372,88 L2848,88 A6,6 0 0 1 2854,94 L2854,137 Z" fill="#2a5780" stroke="none" stroke-width="2" />
<path d="M372,137 L372,100 A10,10 0 0 1 382,90 L548,90 A10,10 0 0 1 558,100 L558,137 Z" fill="#4d79a2" stroke="none" stroke-width="2" />
<rect x="372" y="137" width="2480" height="1187" fill="#000" rx="0" />
<text x="383" y="123" font-size="28" fill="#fff" text-anchor="start" font-weight="normal" >ESU20 1h</text>
<path d="M524,104 L540,120 M540,104 L524,120" fill="none" stroke="#e8e8e8" stroke-width="3.2" />
<text x="568" y="123" font-size="28" fill="#fff" text-anchor="start" font-weight="normal" >MSFT 1h</text>
<rect x="747" y="111.5" width="25" height="3.5" fill="#f0f0f0" rx="0" />
<rect x="757.8" y="101" width="3.5" height="25" fill="#f0f0f0" rx="0" />
<rect x="2763" y="99" width="25" height="23" fill="none" rx="0" stroke="#f0f0f0" stroke-width="2"/>
<path d="M2760,103 L2760,127 L2784,127" fill="none" stroke="#f0f0f0" stroke-width="1.5" />
<path d="M2768,117 L2780,105 M2772,104 L2781,104 L2781,113" fill="none" stroke="#f0f0f0" stroke-width="3" />
<path d="M2842,97 L2829.5,97 L2842,109.5 Z M2809.8,129 L2822.5,129 L2809.8,116.3 Z" fill="#f0f0f0" stroke="none" stroke-width="2" />
<line x1="2836.5" y1="102.5" x2="2830" y2="109" stroke="#f0f0f0" stroke-width="4" />
<line x1="2815.5" y1="123.5" x2="2822" y2="117" stroke="#f0f0f0" stroke-width="4" />
<line x1="577" y1="137" x2="577" y2="1069" stroke="#5e5e5e" stroke-width="2" stroke-dasharray="8 6"/>
<line x1="577" y1="1124" x2="577" y2="1324" stroke="#5e5e5e" stroke-width="2" stroke-dasharray="8 6"/>
<line x1="807" y1="137" x2="807" y2="1069" stroke="#5e5e5e" stroke-width="2" stroke-dasharray="8 6"/>
<line x1="807" y1="1124" x2="807" y2="1324" stroke="#5e5e5e" stroke-width="2" stroke-dasharray="8 6"/>
<line x1="1037" y1="137" x2="1037" y2="1069" stroke="#5e5e5e" stroke-width="2" stroke-dasharray="8 6"/>
<line x1="1037" y1="1124" x2="1037" y2="1324" stroke="#5e5e5e" stroke-width="2" stroke-dasharray="8 6"/>
<line x1="1267" y1="137" x2="1267" y2="1069" stroke="#5e5e5e" stroke-width="2" stroke-dasharray="8 6"/>
<line x1="1267" y1="1124" x2="1267" y2="1324" stroke="#5e5e5e" stroke-width="2" stroke-dasharray="8 6"/>
<line x1="1497" y1="137" x2="1497" y2="1069" stroke="#5e5e5e" stroke-width="2" stroke-dasharray="8 6"/>
<line x1="1497" y1="1124" x2="1497" y2="1324" stroke="#5e5e5e" stroke-width="2" stroke-dasharray="8 6"/>
<line x1="1727" y1="137" x2="1727" y2="1069" stroke="#5e5e5e" stroke-width="2" stroke-dasharray="8 6"/>
<line x1="1727" y1="1124" x2="1727" y2="1324" stroke="#5e5e5e" stroke-width="2" stroke-dasharray="8 6"/>
<line x1="2047" y1="137" x2="2047" y2="1069" stroke="#5e5e5e" stroke-width="2" stroke-dasharray="8 6"/>
<line x1="2047" y1="1124" x2="2047" y2="1324" stroke="#5e5e5e" stroke-width="2" stroke-dasharray="8 6"/>
<line x1="2417" y1="137" x2="2417" y2="1069" stroke="#5e5e5e" stroke-width="2" stroke-dasharray="8 6"/>
<line x1="2417" y1="1124" x2="2417" y2="1324" stroke="#5e5e5e" stroke-width="2" stroke-dasharray="8 6"/>
<line x1="2646" y1="137" x2="2646" y2="1069" stroke="#5e5e5e" stroke-width="2" stroke-dasharray="8 6"/>
<line x1="2646" y1="1124" x2="2646" y2="1324" stroke="#5e5e5e" stroke-width="2" stroke-dasharray="8 6"/>
<rect x="2706" y="516.0" width="28" height="9.6" fill="#2e64a4" rx="0" />
<rect x="2672" y="527.4" width="62" height="9.6" fill="#2e64a4" rx="0" />
<rect x="2632" y="538.8" width="102" height="9.6" fill="#2e64a4" rx="0" />
<rect x="2648" y="550.2" width="86" height="9.6" fill="#2e64a4" rx="0" />
<rect x="2636" y="561.6" width="98" height="9.6" fill="#2e64a4" rx="0" />
<rect x="2694" y="573.0" width="40" height="9.6" fill="#2e64a4" rx="0" />
<rect x="2700" y="584.5" width="34" height="9.6" fill="#2e64a4" rx="0" />
<rect x="2680" y="595.9" width="54" height="9.6" fill="#2e64a4" rx="0" />
<rect x="2614" y="607.3" width="120" height="9.6" fill="#2e64a4" rx="0" />
<rect x="2700" y="618.7" width="34" height="9.6" fill="#2e64a4" rx="0" />
<rect x="2670" y="630.1" width="64" height="9.6" fill="#2e64a4" rx="0" />
<rect x="2656" y="641.5" width="78" height="9.6" fill="#2e64a4" rx="0" />
<rect x="2492" y="652.9" width="242" height="9.6" fill="#2e64a4" rx="0" />
<rect x="2448" y="664.3" width="286" height="9.6" fill="#2e64a4" rx="0" />
<rect x="2494" y="675.7" width="240" height="9.6" fill="#2e64a4" rx="0" />
<rect x="2434" y="687.1" width="300" height="9.6" fill="#9a5e00" rx="0" />
<rect x="2544" y="698.6" width="190" height="9.6" fill="#2e64a4" rx="0" />
<rect x="2616" y="710.0" width="118" height="9.6" fill="#2e64a4" rx="0" />
<rect x="2552" y="721.4" width="182" height="9.6" fill="#2e64a4" rx="0" />
<rect x="2468" y="732.8" width="266" height="9.6" fill="#2e64a4" rx="0" />
<rect x="2546" y="744.2" width="188" height="9.6" fill="#2e64a4" rx="0" />
<rect x="2544" y="755.6" width="190" height="9.6" fill="#2e64a4" rx="0" />
<rect x="2550" y="767.0" width="184" height="9.6" fill="#2e64a4" rx="0" />
<rect x="2580" y="778.4" width="154" height="9.6" fill="#2e64a4" rx="0" />
<rect x="2592" y="789.8" width="142" height="9.6" fill="#2e64a4" rx="0" />
<rect x="2528" y="801.2" width="206" height="9.6" fill="#2e64a4" rx="0" />
<rect x="2632" y="812.7" width="102" height="9.6" fill="#2e64a4" rx="0" />
<rect x="2700" y="824.1" width="34" height="9.6" fill="#2e64a4" rx="0" />
<rect x="2730" y="835.5" width="4" height="9.6" fill="#2e64a4" rx="0" />
<rect x="376" y="646" width="2" height="79" fill="#8ad6f4" rx="0" />
<rect x="374" y="685" width="6" height="40" fill="url(#cb)" rx="0" />
<rect x="386" y="636" width="2" height="54" fill="#8ad6f4" rx="0" />
<rect x="384" y="648" width="6" height="40" fill="url(#cb)" rx="0" />
<rect x="396" y="607" width="2" height="57" fill="#8ad6f4" rx="0" />
<rect x="394" y="622" width="6" height="28" fill="url(#cb)" rx="0" />
<rect x="406" y="608" width="2" height="52" fill="#ff3030" rx="0" />
<rect x="404" y="622" width="6" height="31" fill="url(#cr)" rx="0" />
<rect x="416" y="640" width="2" height="46" fill="#ff3030" rx="0" />
<rect x="414" y="652" width="6" height="20" fill="url(#cr)" rx="0" />
<rect x="426" y="630" width="2" height="71" fill="#8ad6f4" rx="0" />
<rect x="424" y="638" width="6" height="34" fill="url(#cb)" rx="0" />
<rect x="436" y="580" width="2" height="100" fill="#8ad6f4" rx="0" />
<rect x="434" y="598" width="6" height="41" fill="url(#cb)" rx="0" />
<rect x="446" y="562" width="2" height="60" fill="#8ad6f4" rx="0" />
<rect x="444" y="570" width="6" height="31" fill="url(#cb)" rx="0" />
<rect x="456" y="542" width="2" height="44" fill="#ff3030" rx="0" />
<rect x="454" y="570" width="6" height="12" fill="url(#cr)" rx="0" />
<rect x="466" y="579" width="2" height="39" fill="#ff3030" rx="0" />
<rect x="464" y="579" width="6" height="29" fill="url(#cr)" rx="0" />
<rect x="476" y="603" width="2" height="47" fill="#8ad6f4" rx="0" />
<rect x="474" y="604" width="6" height="3" fill="url(#cb)" rx="0" />
<rect x="486" y="584" width="2" height="44" fill="#ff3030" rx="0" />
<rect x="484" y="604" width="6" height="10" fill="url(#cr)" rx="0" />
<rect x="496" y="594" width="2" height="90" fill="#8ad6f4" rx="0" />
<rect x="494" y="600" width="6" height="14" fill="url(#cb)" rx="0" />
<rect x="506" y="550" width="2" height="70" fill="#ff3030" rx="0" />
<rect x="504" y="602" width="6" height="16" fill="url(#cr)" rx="0" />
<rect x="516" y="558" width="2" height="76" fill="#8ad6f4" rx="0" />
<rect x="514" y="574" width="6" height="44" fill="url(#cb)" rx="0" />
<rect x="526" y="496" width="2" height="82" fill="#8ad6f4" rx="0" />
<rect x="524" y="510" width="6" height="68" fill="url(#cb)" rx="0" />
<rect x="536" y="496" width="2" height="40" fill="#ff3030" rx="0" />
<rect x="534" y="510" width="6" height="4" fill="url(#cr)" rx="0" />
<rect x="546" y="484" width="2" height="64" fill="#8ad6f4" rx="0" />
<rect x="544" y="488" width="6" height="26" fill="url(#cb)" rx="0" />
<rect x="556" y="484" width="2" height="84" fill="#ff3030" rx="0" />
<rect x="554" y="488" width="6" height="13" fill="url(#cr)" rx="0" />
<rect x="566" y="462" width="2" height="48" fill="#8ad6f4" rx="0" />
<rect x="564" y="483" width="6" height="19" fill="url(#cb)" rx="0" />
<rect x="576" y="438" width="2" height="56" fill="#8ad6f4" rx="0" />
<rect x="574" y="444" width="6" height="32" fill="url(#cb)" rx="0" />
<rect x="586" y="412" width="2" height="36" fill="#8ad6f4" rx="0" />
<rect x="584" y="426" width="6" height="21" fill="url(#cb)" rx="0" />
<rect x="596" y="426" width="2" height="28" fill="#ff3030" rx="0" />
<rect x="594" y="426" width="6" height="12" fill="url(#cr)" rx="0" />
<rect x="606" y="430" width="2" height="282" fill="#ff3030" rx="0" />
<rect x="604" y="436" width="6" height="46" fill="url(#cr)" rx="0" />
<rect x="616" y="434" width="2" height="100" fill="#8ad6f4" rx="0" />
<rect x="614" y="473" width="6" height="9" fill="url(#cb)" rx="0" />
<rect x="626" y="454" width="2" height="47" fill="#ff3030" rx="0" />
<rect x="624" y="471" width="6" height="11" fill="url(#cr)" rx="0" />
<rect x="636" y="456" width="2" height="36" fill="#8ad6f4" rx="0" />
<rect x="634" y="476" width="6" height="5" fill="url(#cb)" rx="0" />
<rect x="646" y="460" width="2" height="58" fill="#ff3030" rx="0" />
<rect x="644" y="476" width="6" height="38" fill="url(#cr)" rx="0" />
<rect x="656" y="446" width="2" height="80" fill="#8ad6f4" rx="0" />
<rect x="654" y="454" width="6" height="60" fill="url(#cb)" rx="0" />
<rect x="666" y="374" width="2" height="105" fill="#8ad6f4" rx="0" />
<rect x="664" y="376" width="6" height="78" fill="url(#cb)" rx="0" />
<rect x="676" y="368" width="2" height="42" fill="#ff3030" rx="0" />
<rect x="674" y="376" width="6" height="30" fill="url(#cr)" rx="0" />
<rect x="686" y="370" width="2" height="44" fill="#8ad6f4" rx="0" />
<rect x="684" y="382" width="6" height="24" fill="url(#cb)" rx="0" />
<rect x="696" y="350" width="2" height="42" fill="#8ad6f4" rx="0" />
<rect x="694" y="366" width="6" height="18" fill="url(#cb)" rx="0" />
<rect x="706" y="352" width="2" height="36" fill="#8ad6f4" rx="0" />
<rect x="704" y="358" width="6" height="10" fill="url(#cb)" rx="0" />
<rect x="716" y="318" width="2" height="48" fill="#8ad6f4" rx="0" />
<rect x="714" y="338" width="6" height="22" fill="url(#cb)" rx="0" />
<rect x="726" y="332" width="2" height="82" fill="#ff3030" rx="0" />
<rect x="724" y="338" width="6" height="58" fill="url(#cr)" rx="0" />
<rect x="736" y="364" width="2" height="74" fill="#ff3030" rx="0" />
<rect x="734" y="394" width="6" height="12" fill="url(#cr)" rx="0" />
<rect x="746" y="340" width="2" height="84" fill="#8ad6f4" rx="0" />
<rect x="744" y="356" width="6" height="50" fill="url(#cb)" rx="0" />
<rect x="756" y="346" width="2" height="32" fill="#ff3030" rx="0" />
<rect x="754" y="356" width="6" height="9" fill="url(#cr)" rx="0" />
<rect x="766" y="322" width="2" height="43" fill="#8ad6f4" rx="0" />
<rect x="764" y="338" width="6" height="27" fill="url(#cb)" rx="0" />
<rect x="776" y="338" width="2" height="52" fill="#ff3030" rx="0" />
<rect x="774" y="339" width="6" height="40" fill="url(#cr)" rx="0" />
<rect x="786" y="366" width="2" height="91" fill="#ff3030" rx="0" />
<rect x="784" y="378" width="6" height="62" fill="url(#cr)" rx="0" />
<rect x="796" y="414" width="2" height="64" fill="#ff3030" rx="0" />
<rect x="794" y="436" width="6" height="41" fill="url(#cr)" rx="0" />
<rect x="806" y="440" width="2" height="55" fill="#ff3030" rx="0" />
<rect x="804" y="468" width="6" height="20" fill="url(#cr)" rx="0" />
<rect x="816" y="452" width="2" height="46" fill="#8ad6f4" rx="0" />
<rect x="814" y="476" width="6" height="12" fill="url(#cb)" rx="0" />
<rect x="826" y="414" width="2" height="68" fill="#8ad6f4" rx="0" />
<rect x="824" y="427" width="6" height="51" fill="url(#cb)" rx="0" />
<rect x="836" y="414" width="2" height="58" fill="#ff3030" rx="0" />
<rect x="834" y="426" width="6" height="40" fill="url(#cr)" rx="0" />
<rect x="846" y="443" width="2" height="47" fill="#8ad6f4" rx="0" />
<rect x="844" y="456" width="6" height="12" fill="url(#cb)" rx="0" />
<rect x="856" y="426" width="2" height="34" fill="#8ad6f4" rx="0" />
<rect x="854" y="440" width="6" height="17" fill="url(#cb)" rx="0" />
<rect x="866" y="398" width="2" height="46" fill="#8ad6f4" rx="0" />
<rect x="864" y="418" width="6" height="24" fill="url(#cb)" rx="0" />
<rect x="876" y="410" width="2" height="32" fill="#ff3030" rx="0" />
<rect x="874" y="416" width="6" height="24" fill="url(#cr)" rx="0" />
<rect x="886" y="426" width="2" height="40" fill="#8ad6f4" rx="0" />
<rect x="884" y="434" width="6" height="7" fill="url(#cb)" rx="0" />
<rect x="896" y="414" width="2" height="105" fill="#ff3030" rx="0" />
<rect x="894" y="434" width="6" height="70" fill="url(#cr)" rx="0" />
<rect x="906" y="497" width="2" height="95" fill="#ff3030" rx="0" />
<rect x="904" y="501" width="6" height="39" fill="url(#cr)" rx="0" />
<rect x="916" y="524" width="2" height="92" fill="#ff3030" rx="0" />
<rect x="914" y="540" width="6" height="38" fill="url(#cr)" rx="0" />
<rect x="926" y="548" width="2" height="44" fill="#8ad6f4" rx="0" />
<rect x="924" y="549" width="6" height="29" fill="url(#cb)" rx="0" />
<rect x="936" y="528" width="2" height="33" fill="#8ad6f4" rx="0" />
<rect x="934" y="548" width="6" height="3" fill="url(#cb)" rx="0" />
<rect x="946" y="505" width="2" height="50" fill="#8ad6f4" rx="0" />
<rect x="944" y="510" width="6" height="39" fill="url(#cb)" rx="0" />
<rect x="956" y="503" width="2" height="138" fill="#ff3030" rx="0" />
<rect x="954" y="510" width="6" height="129" fill="url(#cr)" rx="0" />
<rect x="966" y="606" width="2" height="103" fill="#ff3030" rx="0" />
<rect x="964" y="634" width="6" height="61" fill="url(#cr)" rx="0" />
<rect x="976" y="678" width="2" height="217" fill="#ff3030" rx="0" />
<rect x="974" y="694" width="6" height="141" fill="url(#cr)" rx="0" />
<rect x="986" y="748" width="2" height="103" fill="#8ad6f4" rx="0" />
<rect x="984" y="752" width="6" height="83" fill="url(#cb)" rx="0" />
<rect x="996" y="740" width="2" height="115" fill="#ff3030" rx="0" />
<rect x="994" y="752" width="6" height="65" fill="url(#cr)" rx="0" />
<rect x="1006" y="769" width="2" height="96" fill="#ff3030" rx="0" />
<rect x="1004" y="813" width="6" height="10" fill="url(#cr)" rx="0" />
<rect x="1016" y="730" width="2" height="96" fill="#8ad6f4" rx="0" />
<rect x="1014" y="800" width="6" height="24" fill="url(#cb)" rx="0" />
<rect x="1026" y="752" width="2" height="52" fill="#8ad6f4" rx="0" />
<rect x="1024" y="756" width="6" height="46" fill="url(#cb)" rx="0" />
<rect x="1036" y="746" width="2" height="57" fill="#ff3030" rx="0" />
<rect x="1034" y="771" width="6" height="22" fill="url(#cr)" rx="0" />
<rect x="1046" y="787" width="2" height="31" fill="#ff3030" rx="0" />
<rect x="1044" y="789" width="6" height="26" fill="url(#cr)" rx="0" />
<rect x="1056" y="734" width="2" height="98" fill="#8ad6f4" rx="0" />
<rect x="1054" y="746" width="6" height="69" fill="url(#cb)" rx="0" />
<rect x="1066" y="726" width="2" height="135" fill="#ff3030" rx="0" />
<rect x="1064" y="746" width="6" height="111" fill="url(#cr)" rx="0" />
<rect x="1076" y="822" width="2" height="71" fill="#8ad6f4" rx="0" />
<rect x="1074" y="829" width="6" height="26" fill="url(#cb)" rx="0" />
<rect x="1086" y="814" width="2" height="57" fill="#8ad6f4" rx="0" />
<rect x="1084" y="822" width="6" height="5" fill="url(#cb)" rx="0" />
<rect x="1096" y="806" width="2" height="53" fill="#ff3030" rx="0" />
<rect x="1094" y="822" width="6" height="15" fill="url(#cr)" rx="0" />
<rect x="1106" y="796" width="2" height="51" fill="#8ad6f4" rx="0" />
<rect x="1104" y="816" width="6" height="21" fill="url(#cb)" rx="0" />
<rect x="1116" y="790" width="2" height="78" fill="#ff3030" rx="0" />
<rect x="1114" y="816" width="6" height="40" fill="url(#cr)" rx="0" />
<rect x="1126" y="844" width="2" height="119" fill="#ff3030" rx="0" />
<rect x="1124" y="854" width="6" height="72" fill="url(#cr)" rx="0" />
<rect x="1136" y="769" width="2" height="159" fill="#8ad6f4" rx="0" />
<rect x="1134" y="790" width="6" height="136" fill="url(#cb)" rx="0" />
<rect x="1146" y="746" width="2" height="72" fill="#ff3030" rx="0" />
<rect x="1144" y="788" width="6" height="18" fill="url(#cr)" rx="0" />
<rect x="1156" y="782" width="2" height="41" fill="#8ad6f4" rx="0" />
<rect x="1154" y="783" width="6" height="23" fill="url(#cb)" rx="0" />
<rect x="1166" y="784" width="2" height="104" fill="#ff3030" rx="0" />
<rect x="1164" y="786" width="6" height="95" fill="url(#cr)" rx="0" />
<rect x="1176" y="818" width="2" height="83" fill="#8ad6f4" rx="0" />
<rect x="1174" y="856" width="6" height="23" fill="url(#cb)" rx="0" />
<rect x="1186" y="802" width="2" height="132" fill="#8ad6f4" rx="0" />
<rect x="1184" y="854" width="6" height="3" fill="url(#cb)" rx="0" />
<rect x="1196" y="762" width="2" height="99" fill="#8ad6f4" rx="0" />
<rect x="1194" y="808" width="6" height="48" fill="url(#cb)" rx="0" />
<rect x="1206" y="790" width="2" height="86" fill="#ff3030" rx="0" />
<rect x="1204" y="808" width="6" height="8" fill="url(#cr)" rx="0" />
<rect x="1216" y="748" width="2" height="68" fill="#8ad6f4" rx="0" />
<rect x="1214" y="776" width="6" height="38" fill="url(#cb)" rx="0" />
<rect x="1226" y="758" width="2" height="48" fill="#ff3030" rx="0" />
<rect x="1224" y="776" width="6" height="5" fill="url(#cr)" rx="0" />
<rect x="1236" y="766" width="2" height="64" fill="#ff3030" rx="0" />
<rect x="1234" y="779" width="6" height="17" fill="url(#cr)" rx="0" />
<rect x="1246" y="638" width="2" height="169" fill="#8ad6f4" rx="0" />
<rect x="1244" y="654" width="6" height="142" fill="url(#cb)" rx="0" />
<rect x="1256" y="622" width="2" height="70" fill="#8ad6f4" rx="0" />
<rect x="1254" y="649" width="6" height="7" fill="url(#cb)" rx="0" />
<rect x="1266" y="646" width="2" height="28" fill="#8ad6f4" rx="0" />
<rect x="1264" y="651" width="6" height="10" fill="url(#cb)" rx="0" />
<rect x="1276" y="620" width="2" height="43" fill="#e8e0b8" rx="0" />
<rect x="1274" y="652" width="6" height="4" fill="url(#cy)" rx="0" />
<rect x="1286" y="649" width="2" height="47" fill="#8ad6f4" rx="0" />
<rect x="1284" y="650" width="6" height="4" fill="url(#cb)" rx="0" />
<rect x="1296" y="637" width="2" height="33" fill="#8ad6f4" rx="0" />
<rect x="1294" y="646" width="6" height="3" fill="url(#cb)" rx="0" />
<rect x="1306" y="641" width="2" height="41" fill="#ff3030" rx="0" />
<rect x="1304" y="643" width="6" height="33" fill="url(#cr)" rx="0" />
<rect x="1316" y="648" width="2" height="38" fill="#8ad6f4" rx="0" />
<rect x="1314" y="656" width="6" height="20" fill="url(#cb)" rx="0" />
<rect x="1326" y="610" width="2" height="50" fill="#8ad6f4" rx="0" />
<rect x="1324" y="638" width="6" height="14" fill="url(#cb)" rx="0" />
<rect x="1336" y="621" width="2" height="42" fill="#ff3030" rx="0" />
<rect x="1334" y="638" width="6" height="19" fill="url(#cr)" rx="0" />
<rect x="1346" y="657" width="2" height="49" fill="#ff3030" rx="0" />
<rect x="1344" y="657" width="6" height="37" fill="url(#cr)" rx="0" />
<rect x="1356" y="676" width="2" height="60" fill="#ff3030" rx="0" />
<rect x="1354" y="692" width="6" height="14" fill="url(#cr)" rx="0" />
<rect x="1366" y="699" width="2" height="64" fill="#ff3030" rx="0" />
<rect x="1364" y="702" width="6" height="13" fill="url(#cr)" rx="0" />
<rect x="1376" y="668" width="2" height="54" fill="#8ad6f4" rx="0" />
<rect x="1374" y="673" width="6" height="41" fill="url(#cb)" rx="0" />
<rect x="1386" y="632" width="2" height="44" fill="#8ad6f4" rx="0" />
<rect x="1384" y="642" width="6" height="32" fill="url(#cb)" rx="0" />
<rect x="1396" y="612" width="2" height="112" fill="#ff3030" rx="0" />
<rect x="1394" y="642" width="6" height="29" fill="url(#cr)" rx="0" />
<rect x="1406" y="668" width="2" height="56" fill="#ff3030" rx="0" />
<rect x="1404" y="670" width="6" height="41" fill="url(#cr)" rx="0" />
<rect x="1416" y="697" width="2" height="87" fill="#ff3030" rx="0" />
<rect x="1414" y="711" width="6" height="40" fill="url(#cr)" rx="0" />
<rect x="1426" y="748" width="2" height="214" fill="#ff3030" rx="0" />
<rect x="1424" y="749" width="6" height="172" fill="url(#cr)" rx="0" />
<rect x="1436" y="858" width="2" height="72" fill="#8ad6f4" rx="0" />
<rect x="1434" y="872" width="6" height="49" fill="url(#cb)" rx="0" />
<rect x="1446" y="870" width="2" height="102" fill="#ff3030" rx="0" />
<rect x="1444" y="871" width="6" height="40" fill="url(#cr)" rx="0" />
<rect x="1456" y="872" width="2" height="52" fill="#8ad6f4" rx="0" />
<rect x="1454" y="910" width="6" height="3" fill="url(#cb)" rx="0" />
<rect x="1466" y="896" width="2" height="106" fill="#ff3030" rx="0" />
<rect x="1464" y="910" width="6" height="60" fill="url(#cr)" rx="0" />
<rect x="1476" y="924" width="2" height="96" fill="#ff3030" rx="0" />
<rect x="1474" y="969" width="6" height="18" fill="url(#cr)" rx="0" />
<rect x="1486" y="919" width="2" height="75" fill="#8ad6f4" rx="0" />
<rect x="1484" y="969" width="6" height="18" fill="url(#cb)" rx="0" />
<rect x="1496" y="984" width="2" height="77" fill="#8ad6f4" rx="0" />
<rect x="1494" y="1000" width="6" height="49" fill="url(#cb)" rx="0" />
<rect x="1506" y="962" width="2" height="67" fill="#8ad6f4" rx="0" />
<rect x="1504" y="984" width="6" height="18" fill="url(#cb)" rx="0" />
<rect x="1516" y="957" width="2" height="60" fill="#8ad6f4" rx="0" />
<rect x="1514" y="959" width="6" height="26" fill="url(#cb)" rx="0" />
<rect x="1526" y="902" width="2" height="61" fill="#8ad6f4" rx="0" />
<rect x="1524" y="906" width="6" height="56" fill="url(#cb)" rx="0" />
<rect x="1536" y="887" width="2" height="68" fill="#ff3030" rx="0" />
<rect x="1534" y="906" width="6" height="31" fill="url(#cr)" rx="0" />
<rect x="1546" y="927" width="2" height="57" fill="#ff3030" rx="0" />
<rect x="1544" y="935" width="6" height="34" fill="url(#cr)" rx="0" />
<rect x="1556" y="941" width="2" height="60" fill="#ff3030" rx="0" />
<rect x="1554" y="966" width="6" height="25" fill="url(#cr)" rx="0" />
<rect x="1566" y="930" width="2" height="63" fill="#8ad6f4" rx="0" />
<rect x="1564" y="990" width="6" height="3" fill="url(#cb)" rx="0" />
<rect x="1576" y="932" width="2" height="73" fill="#8ad6f4" rx="0" />
<rect x="1574" y="952" width="6" height="39" fill="url(#cb)" rx="0" />
<rect x="1586" y="896" width="2" height="63" fill="#8ad6f4" rx="0" />
<rect x="1584" y="932" width="6" height="21" fill="url(#cb)" rx="0" />
<rect x="1596" y="922" width="2" height="55" fill="#8ad6f4" rx="0" />
<rect x="1594" y="925" width="6" height="8" fill="url(#cb)" rx="0" />
<rect x="1606" y="902" width="2" height="53" fill="#8ad6f4" rx="0" />
<rect x="1604" y="909" width="6" height="18" fill="url(#cb)" rx="0" />
<rect x="1616" y="900" width="2" height="57" fill="#ff3030" rx="0" />
<rect x="1614" y="912" width="6" height="10" fill="url(#cr)" rx="0" />
<rect x="1626" y="864" width="2" height="73" fill="#8ad6f4" rx="0" />
<rect x="1624" y="878" width="6" height="41" fill="url(#cb)" rx="0" />
<rect x="1636" y="870" width="2" height="70" fill="#ff3030" rx="0" />
<rect x="1634" y="878" width="6" height="46" fill="url(#cr)" rx="0" />
<rect x="1646" y="910" width="2" height="130" fill="#ff3030" rx="0" />
<rect x="1644" y="920" width="6" height="44" fill="url(#cr)" rx="0" />
<rect x="1656" y="830" width="2" height="135" fill="#8ad6f4" rx="0" />
<rect x="1654" y="870" width="6" height="95" fill="url(#cb)" rx="0" />
<rect x="1666" y="834" width="2" height="64" fill="#8ad6f4" rx="0" />
<rect x="1664" y="864" width="6" height="7" fill="url(#cb)" rx="0" />
<rect x="1676" y="814" width="2" height="53" fill="#8ad6f4" rx="0" />
<rect x="1674" y="834" width="6" height="33" fill="url(#cb)" rx="0" />
<rect x="1686" y="802" width="2" height="40" fill="#8ad6f4" rx="0" />
<rect x="1684" y="822" width="6" height="15" fill="url(#cb)" rx="0" />
<rect x="1696" y="812" width="2" height="54" fill="#ff3030" rx="0" />
<rect x="1694" y="822" width="6" height="34" fill="url(#cr)" rx="0" />
<rect x="1706" y="784" width="2" height="105" fill="#8ad6f4" rx="0" />
<rect x="1704" y="785" width="6" height="71" fill="url(#cb)" rx="0" />
<rect x="1716" y="750" width="2" height="40" fill="#8ad6f4" rx="0" />
<rect x="1714" y="774" width="6" height="14" fill="url(#cb)" rx="0" />
<rect x="1726" y="714" width="2" height="70" fill="#8ad6f4" rx="0" />
<rect x="1724" y="730" width="6" height="45" fill="url(#cb)" rx="0" />
<rect x="1736" y="714" width="2" height="32" fill="#ff3030" rx="0" />
<rect x="1734" y="730" width="6" height="9" fill="url(#cr)" rx="0" />
<rect x="1746" y="735" width="2" height="41" fill="#ff3030" rx="0" />
<rect x="1744" y="737" width="6" height="30" fill="url(#cr)" rx="0" />
<rect x="1756" y="718" width="2" height="49" fill="#8ad6f4" rx="0" />
<rect x="1754" y="745" width="6" height="22" fill="url(#cb)" rx="0" />
<rect x="1766" y="727" width="2" height="29" fill="#ff3030" rx="0" />
<rect x="1764" y="744" width="6" height="7" fill="url(#cr)" rx="0" />
<rect x="1776" y="732" width="2" height="28" fill="#8ad6f4" rx="0" />
<rect x="1774" y="742" width="6" height="9" fill="url(#cb)" rx="0" />
<rect x="1786" y="735" width="2" height="11" fill="#8ad6f4" rx="0" />
<rect x="1784" y="740" width="6" height="4" fill="url(#cb)" rx="0" />
<rect x="1796" y="724" width="2" height="70" fill="#ff3030" rx="0" />
<rect x="1794" y="740" width="6" height="54" fill="url(#cr)" rx="0" />
<rect x="1806" y="772" width="2" height="49" fill="#e8e0b8" rx="0" />
<rect x="1804" y="794" width="6" height="3" fill="url(#cy)" rx="0" />
<rect x="1816" y="756" width="2" height="70" fill="#ff3030" rx="0" />
<rect x="1814" y="796" width="6" height="9" fill="url(#cr)" rx="0" />
<rect x="1826" y="794" width="2" height="48" fill="#ff3030" rx="0" />
<rect x="1824" y="804" width="6" height="25" fill="url(#cr)" rx="0" />
<rect x="1836" y="788" width="2" height="60" fill="#8ad6f4" rx="0" />
<rect x="1834" y="792" width="6" height="37" fill="url(#cb)" rx="0" />
<rect x="1846" y="770" width="2" height="32" fill="#8ad6f4" rx="0" />
<rect x="1844" y="790" width="6" height="4" fill="url(#cb)" rx="0" />
<rect x="1856" y="732" width="2" height="68" fill="#8ad6f4" rx="0" />
<rect x="1854" y="774" width="6" height="18" fill="url(#cb)" rx="0" />
<rect x="1866" y="772" width="2" height="54" fill="#ff3030" rx="0" />
<rect x="1864" y="774" width="6" height="32" fill="url(#cr)" rx="0" />
<rect x="1876" y="744" width="2" height="82" fill="#8ad6f4" rx="0" />
<rect x="1874" y="772" width="6" height="34" fill="url(#cb)" rx="0" />
<rect x="1886" y="685" width="2" height="90" fill="#8ad6f4" rx="0" />
<rect x="1884" y="688" width="6" height="82" fill="url(#cb)" rx="0" />
<rect x="1896" y="654" width="2" height="49" fill="#8ad6f4" rx="0" />
<rect x="1894" y="679" width="6" height="11" fill="url(#cb)" rx="0" />
<rect x="1906" y="644" width="2" height="62" fill="#ff3030" rx="0" />
<rect x="1904" y="679" width="6" height="22" fill="url(#cr)" rx="0" />
<rect x="1916" y="686" width="2" height="43" fill="#8ad6f4" rx="0" />
<rect x="1914" y="692" width="6" height="9" fill="url(#cb)" rx="0" />
<rect x="1926" y="648" width="2" height="68" fill="#8ad6f4" rx="0" />
<rect x="1924" y="649" width="6" height="44" fill="url(#cb)" rx="0" />
<rect x="1936" y="523" width="2" height="163" fill="#8ad6f4" rx="0" />
<rect x="1934" y="574" width="6" height="75" fill="url(#cb)" rx="0" />
<line x1="716" y1="318" x2="1496" y2="1047" stroke="#f8f8f0" stroke-width="2.6" />
<line x1="1496" y1="319" x2="1865" y2="319" stroke="#b8ccff" stroke-width="2.5" />
<rect x="1865" y="302" width="198" height="34" fill="#000" rx="7" stroke="#aec2f6" stroke-width="2.5"/>
<text x="2055" y="325.5" font-size="24" fill="#fff" text-anchor="end" font-weight="normal" >100.0%(3145.75)</text>
<line x1="1496" y1="475" x2="1879" y2="475" stroke="#b8ccff" stroke-width="2.5" />
<rect x="1879" y="458" width="184" height="34" fill="#000" rx="7" stroke="#aec2f6" stroke-width="2.5"/>
<text x="2055" y="481.5" font-size="24" fill="#fff" text-anchor="end" font-weight="normal" >78.6%(3111.62)</text>
<line x1="1496" y1="597" x2="1879" y2="597" stroke="#b8ccff" stroke-width="2.5" />
<rect x="1879" y="580" width="184" height="34" fill="#000" rx="7" stroke="#aec2f6" stroke-width="2.5"/>
<text x="2055" y="603.5" font-size="24" fill="#fff" text-anchor="end" font-weight="normal" >61.8%(3084.82)</text>
<line x1="1496" y1="769" x2="1879" y2="769" stroke="#b8ccff" stroke-width="2.5" />
<rect x="1879" y="752" width="184" height="34" fill="#000" rx="7" stroke="#aec2f6" stroke-width="2.5"/>
<text x="2055" y="775.5" font-size="24" fill="#fff" text-anchor="end" font-weight="normal" >38.2%(3047.18)</text>
<polyline points="715,468 745.6,468 756,470 775.5,470 786,472 796,472 807,462 816.6,467.6 827,453 836.6,449 847,452 856,449 867,445.5 877.6,443.5 887,444 896,452 907,475 916.5,493.7 926,502 937,505.8 947,507 955.5,528 965,578.6 975.7,646 986.6,666 998,685.7 1015.8,707 1025.5,710 1035,769 1045,784 1055.5,777 1064.5,785 1076,801 1091.7,806 1112,810 1116,813 1126,840 1136,837 1146,830 1156,828 1166,830 1176,836.6 1187,845.7 1197,834 1207,833.7 1217,828 1227,824 1237,821 1247,799 1256,794 1266,660 1276,648.6 1287,657.7 1297,655.7 1307,657.7 1317,657 1327,654 1337,652 1347,657 1366,677 1377,679 1387,677 1396.5,673.4 1406,675.5 1416,704.7 1426,785 1436.5,807.8 1447,824 1455.5,829 1465.7,845 1476,873.5 1486,877.6 1496,1020.7 1506.6,1011 1516.8,1005 1525.6,983.6 1535.8,973.4 1546,972 1566,972 1576.7,972 1586,964 1595.6,961.7 1612,958.8 1625,953.7 1635,948 1645.6,959.5 1656,939 1666,927.4 1676,918.6 1686.5,912.8 1696.7,909 1707,899 1715.7,891.5 1726,741.7 1736,737.6 1746,744 1756.6,744 1766.8,741.7 1787,741.7 1796.6,745.5 1807,754 1818,766 1826.7,772.6 1836.3,779.6 1845.6,779.6 1856,777.6 1876,781.7 1896,749 1906,742 1926,733.5 1936.4,701.3" fill="none" stroke="#4a90e2" stroke-width="2.2" stroke-linejoin="round"/>
<path d="M2033.2,526.3 C2167.6,276.4 2288.2,472 2346.5,637.8" fill="none" stroke="#f8f8f0" stroke-width="2.5" />
<path d="M2328,617 L2348,608 L2347,638 Z" fill="#f8f8f0" stroke="none" stroke-width="2" />
<text x="2341" y="351.4" font-size="27.5" fill="#f8f8f0" text-anchor="start" font-weight="normal" >Looking for a</text>
<text x="2341" y="385.29999999999995" font-size="27.5" fill="#f8f8f0" text-anchor="start" font-weight="normal" >pullback</text>
<text x="2341" y="419.2" font-size="27.5" fill="#f8f8f0" text-anchor="start" font-weight="normal" >around 3120</text>
<text x="387" y="171" font-size="26" fill="#e8e4cc" text-anchor="start" font-weight="bold" >ESU20 - 1 hour</text>
<text x="392" y="204" font-size="22" fill="#4c96f4" text-anchor="start" font-weight="normal" >VWAP(1 day,false)</text>
<text x="584" y="204" font-size="22" fill="#fff" text-anchor="start" font-weight="normal" >VP(1,Day)</text>
<text x="381" y="1057" font-size="24" fill="#fff" text-anchor="start" font-weight="normal" >motivewave.com</text>
<line x1="2735" y1="137" x2="2735" y2="1069" stroke="#8a8878" stroke-width="2" />
<line x1="2747" y1="137" x2="2747" y2="1079" stroke="#e2dec4" stroke-width="3" />
<line x1="2735" y1="163.0" x2="2747" y2="163.0" stroke="#e2dec4" stroke-width="2.5" />
<line x1="2740" y1="181.244" x2="2747" y2="181.244" stroke="#e2dec4" stroke-width="2.5" />
<line x1="2740" y1="199.488" x2="2747" y2="199.488" stroke="#e2dec4" stroke-width="2.5" />
<line x1="2740" y1="217.732" x2="2747" y2="217.732" stroke="#e2dec4" stroke-width="2.5" />
<line x1="2740" y1="235.976" x2="2747" y2="235.976" stroke="#e2dec4" stroke-width="2.5" />
<line x1="2735" y1="254.22" x2="2747" y2="254.22" stroke="#e2dec4" stroke-width="2.5" />
<line x1="2740" y1="272.464" x2="2747" y2="272.464" stroke="#e2dec4" stroke-width="2.5" />
<line x1="2740" y1="290.70799999999997" x2="2747" y2="290.70799999999997" stroke="#e2dec4" stroke-width="2.5" />
<line x1="2740" y1="308.952" x2="2747" y2="308.952" stroke="#e2dec4" stroke-width="2.5" />
<line x1="2740" y1="327.196" x2="2747" y2="327.196" stroke="#e2dec4" stroke-width="2.5" />
<line x1="2735" y1="345.44" x2="2747" y2="345.44" stroke="#e2dec4" stroke-width="2.5" />
<line x1="2740" y1="363.68399999999997" x2="2747" y2="363.68399999999997" stroke="#e2dec4" stroke-width="2.5" />
<line x1="2740" y1="381.928" x2="2747" y2="381.928" stroke="#e2dec4" stroke-width="2.5" />
<line x1="2740" y1="400.172" x2="2747" y2="400.172" stroke="#e2dec4" stroke-width="2.5" />
<line x1="2740" y1="418.416" x2="2747" y2="418.416" stroke="#e2dec4" stroke-width="2.5" />
<line x1="2735" y1="436.65999999999997" x2="2747" y2="436.65999999999997" stroke="#e2dec4" stroke-width="2.5" />
<line x1="2740" y1="454.904" x2="2747" y2="454.904" stroke="#e2dec4" stroke-width="2.5" />
<line x1="2740" y1="473.148" x2="2747" y2="473.148" stroke="#e2dec4" stroke-width="2.5" />
<line x1="2740" y1="491.392" x2="2747" y2="491.392" stroke="#e2dec4" stroke-width="2.5" />
<line x1="2740" y1="509.63599999999997" x2="2747" y2="509.63599999999997" stroke="#e2dec4" stroke-width="2.5" />
<line x1="2735" y1="527.88" x2="2747" y2="527.88" stroke="#e2dec4" stroke-width="2.5" />
<line x1="2740" y1="546.124" x2="2747" y2="546.124" stroke="#e2dec4" stroke-width="2.5" />
<line x1="2740" y1="564.3679999999999" x2="2747" y2="564.3679999999999" stroke="#e2dec4" stroke-width="2.5" />
<line x1="2740" y1="582.612" x2="2747" y2="582.612" stroke="#e2dec4" stroke-width="2.5" />
<line x1="2740" y1="600.856" x2="2747" y2="600.856" stroke="#e2dec4" stroke-width="2.5" />
<line x1="2735" y1="619.1" x2="2747" y2="619.1" stroke="#e2dec4" stroke-width="2.5" />
<line x1="2740" y1="637.344" x2="2747" y2="637.344" stroke="#e2dec4" stroke-width="2.5" />
<line x1="2740" y1="655.588" x2="2747" y2="655.588" stroke="#e2dec4" stroke-width="2.5" />
<line x1="2740" y1="673.832" x2="2747" y2="673.832" stroke="#e2dec4" stroke-width="2.5" />
<line x1="2740" y1="692.076" x2="2747" y2="692.076" stroke="#e2dec4" stroke-width="2.5" />
<line x1="2735" y1="710.3199999999999" x2="2747" y2="710.3199999999999" stroke="#e2dec4" stroke-width="2.5" />
<line x1="2740" y1="728.564" x2="2747" y2="728.564" stroke="#e2dec4" stroke-width="2.5" />
<line x1="2740" y1="746.808" x2="2747" y2="746.808" stroke="#e2dec4" stroke-width="2.5" />
<line x1="2740" y1="765.052" x2="2747" y2="765.052" stroke="#e2dec4" stroke-width="2.5" />
<line x1="2740" y1="783.296" x2="2747" y2="783.296" stroke="#e2dec4" stroke-width="2.5" />
<line x1="2735" y1="801.54" x2="2747" y2="801.54" stroke="#e2dec4" stroke-width="2.5" />
<line x1="2740" y1="819.784" x2="2747" y2="819.784" stroke="#e2dec4" stroke-width="2.5" />
<line x1="2740" y1="838.028" x2="2747" y2="838.028" stroke="#e2dec4" stroke-width="2.5" />
<line x1="2740" y1="856.2719999999999" x2="2747" y2="856.2719999999999" stroke="#e2dec4" stroke-width="2.5" />
<line x1="2740" y1="874.516" x2="2747" y2="874.516" stroke="#e2dec4" stroke-width="2.5" />
<line x1="2735" y1="892.76" x2="2747" y2="892.76" stroke="#e2dec4" stroke-width="2.5" />
<line x1="2740" y1="911.004" x2="2747" y2="911.004" stroke="#e2dec4" stroke-width="2.5" />
<line x1="2740" y1="929.248" x2="2747" y2="929.248" stroke="#e2dec4" stroke-width="2.5" />
<line x1="2740" y1="947.492" x2="2747" y2="947.492" stroke="#e2dec4" stroke-width="2.5" />
<line x1="2740" y1="965.736" x2="2747" y2="965.736" stroke="#e2dec4" stroke-width="2.5" />
<line x1="2735" y1="983.98" x2="2747" y2="983.98" stroke="#e2dec4" stroke-width="2.5" />
<line x1="2740" y1="1002.2239999999999" x2="2747" y2="1002.2239999999999" stroke="#e2dec4" stroke-width="2.5" />
<line x1="2740" y1="1020.468" x2="2747" y2="1020.468" stroke="#e2dec4" stroke-width="2.5" />
<text x="2846" y="172.0" font-size="26" fill="#e2dec4" text-anchor="end" font-weight="normal" >3180.00</text>
<text x="2846" y="263.22" font-size="26" fill="#e2dec4" text-anchor="end" font-weight="normal" >3160.00</text>
<text x="2846" y="354.44" font-size="26" fill="#e2dec4" text-anchor="end" font-weight="normal" >3140.00</text>
<text x="2846" y="445.65999999999997" font-size="26" fill="#e2dec4" text-anchor="end" font-weight="normal" >3120.00</text>
<text x="2846" y="628.1" font-size="26" fill="#e2dec4" text-anchor="end" font-weight="normal" >3080.00</text>
<text x="2846" y="719.3199999999999" font-size="26" fill="#e2dec4" text-anchor="end" font-weight="normal" >3060.00</text>
<text x="2846" y="810.54" font-size="26" fill="#e2dec4" text-anchor="end" font-weight="normal" >3040.00</text>
<text x="2846" y="901.76" font-size="26" fill="#e2dec4" text-anchor="end" font-weight="normal" >3020.00</text>
<text x="2846" y="992.98" font-size="26" fill="#e2dec4" text-anchor="end" font-weight="normal" >3000.00</text>
<line x1="372" y1="1069" x2="2735" y2="1069" stroke="#8a8878" stroke-width="2" />
<line x1="372" y1="1079" x2="2747" y2="1079" stroke="#e2dec4" stroke-width="3" />
<line x1="457" y1="1069" x2="457" y2="1079" stroke="#e2dec4" stroke-width="2.5" />
<text x="457" y="1104" font-size="25.5" fill="#e2dec4" text-anchor="middle" font-weight="normal" >2:00</text>
<line x1="667" y1="1069" x2="667" y2="1079" stroke="#e2dec4" stroke-width="2.5" />
<text x="667" y="1104" font-size="25.5" fill="#e2dec4" text-anchor="middle" font-weight="normal" >Jun-23</text>
<line x1="897" y1="1069" x2="897" y2="1079" stroke="#e2dec4" stroke-width="2.5" />
<text x="897" y="1104" font-size="25.5" fill="#e2dec4" text-anchor="middle" font-weight="normal" >Jun-24</text>
<line x1="1127" y1="1069" x2="1127" y2="1079" stroke="#e2dec4" stroke-width="2.5" />
<text x="1127" y="1104" font-size="25.5" fill="#e2dec4" text-anchor="middle" font-weight="normal" >Jun-25</text>
<line x1="1261" y1="1069" x2="1261" y2="1079" stroke="#e2dec4" stroke-width="2.5" />
<text x="1261" y="1104" font-size="25.5" fill="#e2dec4" text-anchor="middle" font-weight="normal" >14:00</text>
<line x1="1493" y1="1069" x2="1493" y2="1079" stroke="#e2dec4" stroke-width="2.5" />
<text x="1493" y="1104" font-size="25.5" fill="#e2dec4" text-anchor="middle" font-weight="normal" >Jun-28</text>
<line x1="1607" y1="1069" x2="1607" y2="1079" stroke="#e2dec4" stroke-width="2.5" />
<text x="1607" y="1104" font-size="25.5" fill="#e2dec4" text-anchor="middle" font-weight="normal" >2:00</text>
<line x1="1817" y1="1069" x2="1817" y2="1079" stroke="#e2dec4" stroke-width="2.5" />
<text x="1817" y="1104" font-size="25.5" fill="#e2dec4" text-anchor="middle" font-weight="normal" >Jun-30</text>
<line x1="2047" y1="1069" x2="2047" y2="1079" stroke="#e2dec4" stroke-width="2.5" />
<text x="2047" y="1104" font-size="25.5" fill="#e2dec4" text-anchor="middle" font-weight="normal" >Jul-2020</text>
<line x1="2277" y1="1069" x2="2277" y2="1079" stroke="#e2dec4" stroke-width="2.5" />
<text x="2277" y="1104" font-size="25.5" fill="#e2dec4" text-anchor="middle" font-weight="normal" >Jul-02</text>
<line x1="2507" y1="1069" x2="2507" y2="1079" stroke="#e2dec4" stroke-width="2.5" />
<text x="2507" y="1104" font-size="25.5" fill="#e2dec4" text-anchor="middle" font-weight="normal" >Jul-03</text>
<line x1="2644" y1="1069" x2="2644" y2="1079" stroke="#e2dec4" stroke-width="2.5" />
<text x="2644" y="1104" font-size="25.5" fill="#e2dec4" text-anchor="middle" font-weight="normal" >Jul-05</text>
<path d="M2737,572.0 L2752,558 L2844,558 A4,4 0 0 1 2848,562 L2848,582 A4,4 0 0 1 2844,586 L2752,586 Z" fill="url(#lb3)" stroke="#555" stroke-width="1.5" />
<text x="2846" y="581.0" font-size="26" fill="#000" text-anchor="end" font-weight="normal" >3090.25</text>
<path d="M2737,550.0 L2752,536 L2844,536 A4,4 0 0 1 2848,540 L2848,560 A4,4 0 0 1 2844,564 L2752,564 Z" fill="url(#lb2)" stroke="#555" stroke-width="1.5" />
<text x="2846" y="559.0" font-size="26" fill="#000" text-anchor="end" font-weight="normal" >3095.00</text>
<path d="M2737,522.0 L2752,508 L2844,508 A4,4 0 0 1 2848,512 L2848,532 A4,4 0 0 1 2844,536 L2752,536 Z" fill="url(#lb1)" stroke="#555" stroke-width="1.5" />
<text x="2846" y="531.0" font-size="26" fill="#000" text-anchor="end" font-weight="normal" >3101.25</text>
<path d="M2737,846.0 L2752,832 L2844,832 A4,4 0 0 1 2848,836 L2848,856 A4,4 0 0 1 2844,860 L2752,860 Z" fill="url(#lb4)" stroke="#555" stroke-width="1.5" />
<text x="2846" y="855.0" font-size="26" fill="#000" text-anchor="end" font-weight="normal" >3030.25</text>
<rect x="372" y="1113" width="2480" height="11" fill="#3c3c3c" rx="0" />
<text x="386.5" y="1159" font-size="25.5" fill="#e8e4cc" text-anchor="start" font-weight="bold" >RSI(C,14)</text>
<line x1="372" y1="1173" x2="2735" y2="1173" stroke="#f0f0f0" stroke-width="2.5" />
<line x1="372" y1="1275" x2="2735" y2="1275" stroke="#f0f0f0" stroke-width="2.5" />
<line x1="376" y1="1225" x2="2735" y2="1225" stroke="#f0f0f0" stroke-width="2.5" stroke-dasharray="9 7"/>
<clipPath id="below30"><rect x="372" y="1275" width="2363" height="50"/></clipPath>
<polygon points="372,1275 372,1262.6 387,1246.2 397,1240 407,1245.4 417,1249.7 427,1239 437,1227.4 447,1220 457,1223.5 467,1229.4 477,1229.8 487,1231.7 497,1227.4 507,1233.7 517,1216.5 527,1200 537,1200 547,1193.4 557,1199.2 567,1193.4 577,1184.4 587,1179.7 597,1183.6 607,1205 617,1201.6 627,1205.5 637,1203.5 647,1219.6 657,1200 667,1180.4 677,1191.4 687,1187.5 697,1183.6 707,1181.6 717,1176.5 727,1202 737,1206.3 747,1191.4 757,1196 767,1188.3 777,1206 787,1224.7 797,1235.2 807,1242 817,1236 827,1220.4 837,1231.7 847,1229.8 857,1223.5 867,1215.7 877,1224.3 887,1222.3 897,1244.2 907,1254 917,1263.8 927,1251.7 937,1251.7 947,1236 957,1265.8 967,1274.4 977,1293.2 987,1268 997,1276.3 1007,1278.3 1017,1272.4 1027,1258 1037,1263.4 1047,1267.3 1057,1247.8 1067,1265.8 1077,1258 1087,1255.6 1097,1258 1107,1251.7 1117,1259.5 1127,1271.6 1137,1236 1147,1238 1157,1234 1167,1251.7 1177,1246.2 1187,1243.9 1197,1234 1207,1234 1217,1226.2 1227,1226.2 1237,1229.8 1247,1198.5 1257,1198.5 1267,1198.5 1277,1198.5 1287,1198 1297,1195.8 1307,1207.5 1317,1201.5 1327,1198 1337,1206 1347,1217.4 1357,1221.3 1367,1225.5 1377,1211.4 1387,1201.5 1397,1213.8 1407,1228 1417,1240 1427,1275.3 1437,1259.4 1447,1266 1457,1266 1467,1275.3 1477,1278 1487,1271.4 1497,1278 1507,1270 1517,1261.8 1527,1243.5 1537,1249.5 1547,1255.5 1557,1261.8 1567,1261.8 1577,1248 1587,1240 1597,1237.5 1607,1231.5 1617,1234 1627,1219.8 1637,1233 1647,1246 1657,1216 1667,1216 1677,1206 1687,1204 1697,1213.8 1707,1198 1717,1193.4 1727,1183.5 1737,1188.3 1747,1198.5 1757,1193.4 1767,1195.8 1777,1193.4 1787,1191.3 1797,1216 1807,1216 1817,1219.8 1827,1230.3 1837,1216 1847,1213.8 1857,1207.5 1867,1222 1877,1210 1887,1186 1897,1182 1907,1193.4 1917,1189.8 1927,1180 1937,1163.5 1937,1275" fill="#7a5c62" clip-path="url(#below30)"/>
<polyline points="372,1262.6 387,1246.2 397,1240 407,1245.4 417,1249.7 427,1239 437,1227.4 447,1220 457,1223.5 467,1229.4 477,1229.8 487,1231.7 497,1227.4 507,1233.7 517,1216.5 527,1200 537,1200 547,1193.4 557,1199.2 567,1193.4 577,1184.4 587,1179.7 597,1183.6 607,1205 617,1201.6 627,1205.5 637,1203.5 647,1219.6 657,1200 667,1180.4 677,1191.4 687,1187.5 697,1183.6 707,1181.6 717,1176.5 727,1202 737,1206.3 747,1191.4 757,1196 767,1188.3 777,1206 787,1224.7 797,1235.2 807,1242 817,1236 827,1220.4 837,1231.7 847,1229.8 857,1223.5 867,1215.7 877,1224.3 887,1222.3 897,1244.2 907,1254 917,1263.8 927,1251.7 937,1251.7 947,1236 957,1265.8 967,1274.4 977,1293.2 987,1268 997,1276.3 1007,1278.3 1017,1272.4 1027,1258 1037,1263.4 1047,1267.3 1057,1247.8 1067,1265.8 1077,1258 1087,1255.6 1097,1258 1107,1251.7 1117,1259.5 1127,1271.6 1137,1236 1147,1238 1157,1234 1167,1251.7 1177,1246.2 1187,1243.9 1197,1234 1207,1234 1217,1226.2 1227,1226.2 1237,1229.8 1247,1198.5 1257,1198.5 1267,1198.5 1277,1198.5 1287,1198 1297,1195.8 1307,1207.5 1317,1201.5 1327,1198 1337,1206 1347,1217.4 1357,1221.3 1367,1225.5 1377,1211.4 1387,1201.5 1397,1213.8 1407,1228 1417,1240 1427,1275.3 1437,1259.4 1447,1266 1457,1266 1467,1275.3 1477,1278 1487,1271.4 1497,1278 1507,1270 1517,1261.8 1527,1243.5 1537,1249.5 1547,1255.5 1557,1261.8 1567,1261.8 1577,1248 1587,1240 1597,1237.5 1607,1231.5 1617,1234 1627,1219.8 1637,1233 1647,1246 1657,1216 1667,1216 1677,1206 1687,1204 1697,1213.8 1707,1198 1717,1193.4 1727,1183.5 1737,1188.3 1747,1198.5 1757,1193.4 1767,1195.8 1777,1193.4 1787,1191.3 1797,1216 1807,1216 1817,1219.8 1827,1230.3 1837,1216 1847,1213.8 1857,1207.5 1867,1222 1877,1210 1887,1186 1897,1182 1907,1193.4 1917,1189.8 1927,1180 1937,1163.5" fill="none" stroke="#f4f4f4" stroke-width="2.2" stroke-linejoin="round"/>
<line x1="2735" y1="1124" x2="2735" y2="1324" stroke="#8a8878" stroke-width="2" />
<line x1="2747" y1="1124" x2="2747" y2="1324" stroke="#e2dec4" stroke-width="3" />
<line x1="2740" y1="1150.0" x2="2747" y2="1150.0" stroke="#e2dec4" stroke-width="2.5" />
<line x1="2740" y1="1175.0" x2="2747" y2="1175.0" stroke="#e2dec4" stroke-width="2.5" />
<line x1="2740" y1="1200.0" x2="2747" y2="1200.0" stroke="#e2dec4" stroke-width="2.5" />
<line x1="2740" y1="1225.0" x2="2747" y2="1225.0" stroke="#e2dec4" stroke-width="2.5" />
<line x1="2740" y1="1250.0" x2="2747" y2="1250.0" stroke="#e2dec4" stroke-width="2.5" />
<line x1="2740" y1="1275.0" x2="2747" y2="1275.0" stroke="#e2dec4" stroke-width="2.5" />
<line x1="2740" y1="1300.0" x2="2747" y2="1300.0" stroke="#e2dec4" stroke-width="2.5" />
<path d="M2737,1174.0 L2752,1161 L2802,1161 A5,5 0 0 1 2807,1166 L2807,1182 A5,5 0 0 1 2802,1187 L2752,1187 Z" fill="#fff" stroke="#222" stroke-width="1.2" />
<text x="2802" y="1183.0" font-size="24" fill="#000" text-anchor="end" font-weight="normal" >70.0</text>
<path d="M2737,1164.0 L2752,1151 L2802,1151 A5,5 0 0 1 2807,1156 L2807,1172 A5,5 0 0 1 2802,1177 L2752,1177 Z" fill="#fff" stroke="#222" stroke-width="1.2" />
<text x="2802" y="1173.0" font-size="24" fill="#000" text-anchor="end" font-weight="normal" >72.8</text>
<path d="M2737,1225.0 L2752,1211 L2802,1211 A5,5 0 0 1 2807,1216 L2807,1234 A5,5 0 0 1 2802,1239 L2752,1239 Z" fill="#fff" stroke="#222" stroke-width="1.2" />
<text x="2802" y="1234.0" font-size="24" fill="#000" text-anchor="end" font-weight="normal" >50.0</text>
<path d="M2737,1275.0 L2752,1261 L2802,1261 A5,5 0 0 1 2807,1266 L2807,1284 A5,5 0 0 1 2802,1289 L2752,1289 Z" fill="#fff" stroke="#222" stroke-width="1.2" />
<text x="2802" y="1284.0" font-size="24" fill="#000" text-anchor="end" font-weight="normal" >30.0</text>
<path d="M2678,1129 L2690,1141 L2682,1141 L2682,1153 L2674,1153 L2674,1141 L2666,1141 Z" fill="#ececec" stroke="none" stroke-width="2" />
<path d="M2702,1131 L2722,1151 M2722,1131 L2702,1151" fill="none" stroke="#ececec" stroke-width="4.5" />
<rect x="372" y="1323.5" width="2480" height="2" fill="#505050" rx="0" />
<path d="M372,1325 L2852,1325 L2852,1362 A10,10 0 0 1 2842,1372 L380,1372 A8,8 0 0 1 372,1364 Z" fill="#1e1e1e" stroke="none" stroke-width="2" />
<rect x="1159" y="1326" width="112" height="41" fill="#4a4a4a" rx="7" />
<text x="423" y="1357.7" font-size="27" fill="#fff" text-anchor="middle" font-weight="normal" >1 min</text>
<text x="522" y="1357.7" font-size="27" fill="#fff" text-anchor="middle" font-weight="normal" >5 min</text>
<text x="632" y="1357.7" font-size="27" fill="#fff" text-anchor="middle" font-weight="normal" >10 min</text>
<text x="749" y="1357.7" font-size="27" fill="#fff" text-anchor="middle" font-weight="normal" >15 min</text>
<text x="865" y="1357.7" font-size="27" fill="#fff" text-anchor="middle" font-weight="normal" >20 min</text>
<text x="982" y="1357.7" font-size="27" fill="#fff" text-anchor="middle" font-weight="normal" >30 min</text>
<text x="1099" y="1357.7" font-size="27" fill="#fff" text-anchor="middle" font-weight="normal" >45 min</text>
<text x="1215" y="1357.7" font-size="27" fill="#fff" text-anchor="middle" font-weight="normal" >1 hour</text>
<text x="1326" y="1357.7" font-size="27" fill="#fff" text-anchor="middle" font-weight="normal" >2 hour</text>
<text x="1439" y="1357.7" font-size="27" fill="#fff" text-anchor="middle" font-weight="normal" >6 hour</text>
<text x="1546" y="1357.7" font-size="27" fill="#fff" text-anchor="middle" font-weight="normal" >1 day</text>
<text x="1657" y="1357.7" font-size="27" fill="#fff" text-anchor="middle" font-weight="normal" >1 week</text>
<text x="1776" y="1357.7" font-size="27" fill="#fff" text-anchor="middle" font-weight="normal" >2 week</text>
<text x="1905" y="1357.7" font-size="27" fill="#fff" text-anchor="middle" font-weight="normal" >1 month</text>
<text x="2038" y="1357.7" font-size="27" fill="#fff" text-anchor="middle" font-weight="normal" >3 month</text>
<rect x="2550" y="1333" width="28" height="2.5" fill="#ececec" rx="0" />
<rect x="2550" y="1346" width="28" height="2.5" fill="#ececec" rx="0" />
<rect x="2550" y="1359" width="28" height="2.5" fill="#ececec" rx="0" />
<path d="M2603,1332 L2603,1362 L2630,1362" fill="none" stroke="#ececec" stroke-width="2" />
<path d="M2606,1358 L2606,1344 L2616,1336 L2623,1346 L2630,1338 L2634,1350" fill="none" stroke="#f5b942" stroke-width="2" />
<path d="M2606,1358 L2606,1348 L2615,1342 L2624,1352 L2624,1358 Z" fill="#ececec" stroke="none" stroke-width="2" />
<rect x="2622" y="1351" width="2.5" height="14" fill="#f5b942" rx="0" />
<rect x="2616" y="1357" width="14" height="2.5" fill="#f5b942" rx="0" />
<path d="M2641,1343 L2659,1343 L2650.0,1355 Z" fill="#d8d8d8" stroke="none" stroke-width="2" />
<path d="M2679,1347 Q2695,1332 2711,1347 Q2695,1362 2679,1347 Z" fill="none" stroke="#ececec" stroke-width="2.5" />
<circle cx="2695" cy="1347" r="5.5" fill="#ececec"/><circle cx="2693" cy="1345" r="1.8" fill="#1e1e1e"/>
<rect x="2733" y="1335" width="3.5" height="26" fill="#ececec" rx="0" />
<rect x="2762" y="1335" width="3.5" height="26" fill="#ececec" rx="0" />
<path d="M2738,1348 L2745,1341 L2745,1345 L2753,1345 L2753,1341 L2760,1348 L2753,1355 L2753,1351 L2745,1351 L2745,1355 Z" fill="#f5b942" stroke="none" stroke-width="2" />
<path d="M2771,1343 L2790,1343 L2780.5,1355 Z" fill="#d8d8d8" stroke="none" stroke-width="2" />
<rect x="2811" y="1338" width="25" height="22" fill="none" rx="2" stroke="#ececec" stroke-width="2.2"/>
<rect x="2811" y="1338" width="25" height="6" fill="#ececec" rx="0" />
<rect x="2815" y="1333" width="2.5" height="7" fill="#ececec" rx="0" />
<rect x="2829" y="1333" width="2.5" height="7" fill="#ececec" rx="0" />
<rect x="2817" y="1346" width="1.5" height="13" fill="#ececec" rx="0" />
<rect x="2823" y="1346" width="1.5" height="13" fill="#ececec" rx="0" />
<rect x="2829" y="1346" width="1.5" height="13" fill="#ececec" rx="0" />
<rect x="2813" y="1352" width="22" height="1.5" fill="#ececec" rx="0" />
<path d="M2822,1352 L2834,1352 L2834,1347 L2842,1355 L2834,1363 L2834,1358 L2822,1358 Z" fill="#f5b942" stroke="none" stroke-width="2" />
<path d="M372,1731 L372,1398 A12,12 0 0 1 384,1386 L2842,1386 A12,12 0 0 1 2854,1398 L2854,1719 A12,12 0 0 1 2842,1731 Z" fill="#161616" stroke="#3a3a3a" stroke-width="2" />
<path d="M372,1436 L372,1398 A12,12 0 0 1 384,1386 L2842,1386 A12,12 0 0 1 2854,1398 L2854,1436 Z" fill="#3d3d3d" stroke="none" stroke-width="2" />
<path d="M372,1436 L372,1399 A10,10 0 0 1 382,1389 L553,1389 A10,10 0 0 1 563,1399 L563,1436 Z" fill="#575757" stroke="none" stroke-width="2" />
<text x="382" y="1421" font-size="28" fill="#fff" text-anchor="start" font-weight="normal" >NYSE (34)</text>
<path d="M531,1405 L546,1420 M546,1405 L531,1420" fill="none" stroke="#e8e8e8" stroke-width="3.2" />
<text x="574.5" y="1421" font-size="28" fill="#fff" text-anchor="start" font-weight="normal" >NASDAQ (18)</text>
<text x="808" y="1421" font-size="28" fill="#fff" text-anchor="start" font-weight="normal" >Alerts</text>
<rect x="944" y="1410" width="24" height="3.6" fill="#f0f0f0" rx="0" />
<rect x="954.2" y="1400" width="3.6" height="24" fill="#f0f0f0" rx="0" />
<rect x="2305" y="1389" width="51" height="45" fill="#4a4a4a" rx="2" stroke="#5e5e5e" stroke-width="1.5"/>
<path d="M2315,1403 L2343,1403 M2316,1419 L2344,1419" fill="none" stroke="#ececec" stroke-width="3" />
<path d="M2338,1397 L2345,1403 L2338,1409 Z M2321,1413 L2314,1419 L2321,1425 Z" fill="#ececec" stroke="none" stroke-width="2" />
<rect x="2345.5" y="1395" width="2.5" height="15" fill="#ececec" rx="0" />
<rect x="2314" y="1412" width="2.5" height="15" fill="#ececec" rx="0" />
<rect x="2369" y="1397" width="8" height="8" fill="#ececec" rx="0" />
<rect x="2369" y="1407" width="8" height="8" fill="#ececec" rx="0" />
<rect x="2369" y="1417" width="8" height="8" fill="#ececec" rx="0" />
<rect x="2379" y="1397" width="8" height="8" fill="#ececec" rx="0" />
<rect x="2379" y="1407" width="8" height="8" fill="#ececec" rx="0" />
<rect x="2379" y="1417" width="8" height="8" fill="#ececec" rx="0" />
<rect x="2389" y="1397" width="8" height="8" fill="#ececec" rx="0" />
<rect x="2389" y="1407" width="8" height="8" fill="#ececec" rx="0" />
<rect x="2389" y="1417" width="8" height="8" fill="#ececec" rx="0" />
<circle cx="2432" cy="1406" r="8.5" fill="none" stroke="#ececec" stroke-width="3"/>
<line x1="2438" y1="1412" x2="2446" y2="1421" stroke="#ececec" stroke-width="3.5" stroke-linecap="round"/>
<rect x="2441" y="1400.5" width="11" height="2.5" fill="#f5b942" rx="0" />
<rect x="2445.2" y="1396" width="2.5" height="11" fill="#f5b942" rx="0" />
<ellipse cx="2482" cy="1421" rx="10" ry="5" fill="#ececec" stroke="#393939" stroke-width="1.2"/>
<ellipse cx="2482" cy="1413" rx="10" ry="5" fill="#ececec" stroke="#393939" stroke-width="1.2"/>
<ellipse cx="2482" cy="1405" rx="10" ry="5" fill="#ececec" stroke="#393939" stroke-width="1.2"/>
<ellipse cx="2482" cy="1401" rx="10" ry="4.5" fill="#ececec"/>
<rect x="2495" y="1403.5" width="11" height="2.5" fill="#f5b942" rx="0" />
<rect x="2499.2" y="1399" width="2.5" height="11" fill="#f5b942" rx="0" />
<ellipse cx="2533" cy="1421" rx="10" ry="5" fill="#ececec" stroke="#393939" stroke-width="1.2"/>
<ellipse cx="2533" cy="1413" rx="10" ry="5" fill="#ececec" stroke="#393939" stroke-width="1.2"/>
<ellipse cx="2533" cy="1405" rx="10" ry="5" fill="#ececec" stroke="#393939" stroke-width="1.2"/>
<ellipse cx="2533" cy="1401" rx="10" ry="4.5" fill="#ececec"/>
<path d="M2548,1404 L2548,1413 L2544,1413 L2550,1420 L2556,1413 L2552,1413 L2552,1404 Z" fill="#f5b942" stroke="none" stroke-width="2" />
<ellipse cx="2585" cy="1421" rx="10" ry="5" fill="#ececec" stroke="#393939" stroke-width="1.2"/>
<ellipse cx="2585" cy="1413" rx="10" ry="5" fill="#ececec" stroke="#393939" stroke-width="1.2"/>
<ellipse cx="2585" cy="1405" rx="10" ry="5" fill="#ececec" stroke="#393939" stroke-width="1.2"/>
<ellipse cx="2585" cy="1401" rx="10" ry="4.5" fill="#ececec"/>
<path d="M2600,1420 L2600,1411 L2596,1411 L2602,1404 L2608,1411 L2604,1411 L2604,1420 Z" fill="#f5b942" stroke="none" stroke-width="2" />
<path d="M2630,1424 L2650,1400 L2655,1405 L2635,1428 L2629,1429 Z" fill="#f5b942" stroke="none" stroke-width="2" />
<path d="M2631,1425 L2634,1427" fill="none" stroke="#393939" stroke-width="1.5" />
<path d="M2681,1397 Q2696,1389 2712,1397 L2700,1412 L2700,1427 L2693,1427 L2693,1412 Z" fill="#ececec" stroke="none" stroke-width="2" />
<ellipse cx="2696.5" cy="1397.5" rx="11" ry="3" fill="#393939"/>
<path d="M2719,1407 L2738,1407 L2728.5,1419 Z" fill="#d8d8d8" stroke="none" stroke-width="2" />
<rect x="2763" y="1397" width="25" height="25" fill="none" rx="0" stroke="#ececec" stroke-width="2"/>
<path d="M2760,1400 L2760,1425 L2785,1425" fill="none" stroke="#ececec" stroke-width="1.5" />
<path d="M2769,1416 L2781,1404 M2773,1403 L2782,1403 L2782,1412" fill="none" stroke="#ececec" stroke-width="3" />
<path d="M2842,1395 L2829.5,1395 L2842,1407.5 Z M2809.8,1427 L2822.5,1427 L2809.8,1414.3 Z" fill="#f0f0f0" stroke="none" stroke-width="2" />
<line x1="2836.5" y1="1400.5" x2="2830" y2="1407" stroke="#f0f0f0" stroke-width="4" />
<line x1="2815.5" y1="1421.5" x2="2822" y2="1415" stroke="#f0f0f0" stroke-width="4" />
<rect x="372" y="1436" width="2480" height="58" fill="#161616" rx="0" />
<rect x="373" y="1439" width="173" height="52" fill="#2a2a2a" rx="0" />
<text x="459.0" y="1476" font-size="27.5" fill="#fff" text-anchor="middle" font-weight="bold" >Symbol</text>
<rect x="549" y="1439" width="159" height="52" fill="#2a2a2a" rx="0" />
<text x="628.0" y="1476" font-size="27.5" fill="#fff" text-anchor="middle" font-weight="bold" >Exchange</text>
<rect x="711" y="1439" width="127" height="52" fill="#2a2a2a" rx="0" />
<text x="774.0" y="1476" font-size="27.5" fill="#fff" text-anchor="middle" font-weight="bold" >Bid Size</text>
<rect x="841" y="1439" width="149" height="52" fill="#2a2a2a" rx="0" />
<text x="915.0" y="1476" font-size="27.5" fill="#fff" text-anchor="middle" font-weight="bold" >Bid</text>
<rect x="993" y="1439" width="150" height="52" fill="#2a2a2a" rx="0" />
<text x="1067.5" y="1476" font-size="27.5" fill="#fff" text-anchor="middle" font-weight="bold" >Ask</text>
<rect x="1146" y="1439" width="126" height="52" fill="#2a2a2a" rx="0" />
<text x="1208.5" y="1476" font-size="27.5" fill="#fff" text-anchor="middle" font-weight="bold" >Ask Size</text>
<rect x="1275" y="1439" width="149" height="52" fill="#2a2a2a" rx="0" />
<text x="1349.0" y="1476" font-size="27.5" fill="#fff" text-anchor="middle" font-weight="bold" >Last Price</text>
<rect x="1427" y="1439" width="127" height="52" fill="#2a2a2a" rx="0" />
<text x="1490.0" y="1476" font-size="27.5" fill="#fff" text-anchor="middle" font-weight="bold" >Last S...</text>
<rect x="1557" y="1439" width="213" height="52" fill="#2a2a2a" rx="0" />
<text x="1663.0" y="1476" font-size="27.5" fill="#fff" text-anchor="middle" font-weight="bold" >Last Time</text>
<rect x="1773" y="1439" width="149" height="52" fill="#2a2a2a" rx="0" />
<text x="1847.0" y="1476" font-size="27.5" fill="#fff" text-anchor="middle" font-weight="bold" >Change</text>
<rect x="1925" y="1439" width="171" height="52" fill="#2a2a2a" rx="0" />
<text x="2010.0" y="1476" font-size="27.5" fill="#fff" text-anchor="middle" font-weight="bold" >% Change</text>
<rect x="2099" y="1439" width="149" height="52" fill="#2a2a2a" rx="0" />
<text x="2173.0" y="1476" font-size="27.5" fill="#fff" text-anchor="middle" font-weight="bold" >High</text>
<rect x="2251" y="1439" width="149" height="52" fill="#2a2a2a" rx="0" />
<text x="2325.0" y="1476" font-size="27.5" fill="#fff" text-anchor="middle" font-weight="bold" >Low</text>
<rect x="2403" y="1439" width="415" height="52" fill="#2a2a2a" rx="0" />
<rect x="2821" y="1439" width="29" height="52" fill="#2a2a2a" rx="0" />
<rect x="2826" y="1461" width="11" height="3.5" fill="#ececec" rx="0" />
<rect x="2829.8" y="1457" width="3.5" height="11" fill="#ececec" rx="0" />
<rect x="372" y="1493.5" width="2448" height="48.2" fill="#212121" rx="0" />
<rect x="1776" y="1495.5" width="147" height="45" fill="#8f2222" rx="5" />
<rect x="1928" y="1495.5" width="169" height="45" fill="#8f2222" rx="5" />
<text x="380" y="1528.0" font-size="27" fill="#fff" text-anchor="start" font-weight="normal" >AEO</text>
<text x="555" y="1528.0" font-size="27" fill="#fff" text-anchor="start" font-weight="normal" >NYSE</text>
<text x="831.6" y="1528.0" font-size="27" fill="#fff" text-anchor="end" font-weight="normal" >1</text>
<text x="982" y="1528.0" font-size="27" fill="#fff" text-anchor="end" font-weight="normal" >10.86</text>
<text x="1134" y="1528.0" font-size="27" fill="#fff" text-anchor="end" font-weight="normal" >11.01</text>
<text x="1267" y="1528.0" font-size="27" fill="#fff" text-anchor="end" font-weight="normal" >6</text>
<text x="1416" y="1528.0" font-size="27" fill="#fff" text-anchor="end" font-weight="normal" >10.90</text>
<text x="1547" y="1528.0" font-size="27" fill="#fff" text-anchor="end" font-weight="normal" >330339</text>
<text x="1761" y="1528.0" font-size="27" fill="#fff" text-anchor="end" font-weight="normal" >13:15:16</text>
<text x="1915" y="1528.0" font-size="27" fill="#fff" text-anchor="end" font-weight="normal" >-0.16</text>
<text x="2090" y="1528.0" font-size="27" fill="#fff" text-anchor="end" font-weight="normal" >-1.45%</text>
<text x="2241" y="1528.0" font-size="27" fill="#fff" text-anchor="end" font-weight="normal" >11.08</text>
<text x="2393" y="1528.0" font-size="27" fill="#fff" text-anchor="end" font-weight="normal" >10.61</text>
<rect x="372" y="1541.7" width="2448" height="48.2" fill="#3b3b3b" rx="0" />
<rect x="1776" y="1543.7" width="147" height="45" fill="#2a5a8a" rx="5" />
<rect x="1928" y="1543.7" width="169" height="45" fill="#2a5a8a" rx="5" />
<text x="380" y="1576.2" font-size="27" fill="#fff" text-anchor="start" font-weight="normal" >AXP</text>
<text x="555" y="1576.2" font-size="27" fill="#fff" text-anchor="start" font-weight="normal" >NYSE</text>
<text x="831.6" y="1576.2" font-size="27" fill="#fff" text-anchor="end" font-weight="normal" >1</text>
<text x="982" y="1576.2" font-size="27" fill="#fff" text-anchor="end" font-weight="normal" >95.01</text>
<text x="1134" y="1576.2" font-size="27" fill="#fff" text-anchor="end" font-weight="normal" >95.49</text>
<text x="1267" y="1576.2" font-size="27" fill="#fff" text-anchor="end" font-weight="normal" >1</text>
<text x="1416" y="1576.2" font-size="27" fill="#fff" text-anchor="end" font-weight="normal" >95.14</text>
<text x="1547" y="1576.2" font-size="27" fill="#fff" text-anchor="end" font-weight="normal" >200</text>
<text x="1761" y="1576.2" font-size="27" fill="#fff" text-anchor="end" font-weight="normal" >13:15:22</text>
<text x="1915" y="1576.2" font-size="27" fill="#fff" text-anchor="end" font-weight="normal" >0.62</text>
<text x="2090" y="1576.2" font-size="27" fill="#fff" text-anchor="end" font-weight="normal" >0.66%</text>
<text x="2241" y="1576.2" font-size="27" fill="#fff" text-anchor="end" font-weight="normal" >95.60</text>
<text x="2393" y="1576.2" font-size="27" fill="#fff" text-anchor="end" font-weight="normal" >93.57</text>
<rect x="372" y="1589.9" width="2448" height="48.2" fill="#212121" rx="0" />
<rect x="1776" y="1591.9" width="147" height="45" fill="#2a5a8a" rx="5" />
<rect x="1928" y="1591.9" width="169" height="45" fill="#2a5a8a" rx="5" />
<text x="380" y="1624.4" font-size="27" fill="#fff" text-anchor="start" font-weight="normal" >CSX</text>
<text x="555" y="1624.4" font-size="27" fill="#fff" text-anchor="start" font-weight="normal" >NASDAQ</text>
<text x="831.6" y="1624.4" font-size="27" fill="#fff" text-anchor="end" font-weight="normal" >1</text>
<text x="982" y="1624.4" font-size="27" fill="#fff" text-anchor="end" font-weight="normal" >69.74</text>
<text x="1134" y="1624.4" font-size="27" fill="#fff" text-anchor="end" font-weight="normal" >69.99</text>
<text x="1267" y="1624.4" font-size="27" fill="#fff" text-anchor="end" font-weight="normal" >2</text>
<text x="1416" y="1624.4" font-size="27" fill="#fff" text-anchor="end" font-weight="normal" >69.74</text>
<text x="1547" y="1624.4" font-size="27" fill="#fff" text-anchor="end" font-weight="normal" >739595</text>
<text x="1761" y="1624.4" font-size="27" fill="#fff" text-anchor="end" font-weight="normal" >13:15:20</text>
<text x="1915" y="1624.4" font-size="27" fill="#fff" text-anchor="end" font-weight="normal" >1.24</text>
<text x="2090" y="1624.4" font-size="27" fill="#fff" text-anchor="end" font-weight="normal" >1.81%</text>
<text x="2241" y="1624.4" font-size="27" fill="#fff" text-anchor="end" font-weight="normal" >70.31</text>
<text x="2393" y="1624.4" font-size="27" fill="#fff" text-anchor="end" font-weight="normal" >67.99</text>
<rect x="372" y="1638.1" width="2448" height="48.2" fill="#3b3b3b" rx="0" />
<rect x="1776" y="1640.1" width="147" height="45" fill="#2a5a8a" rx="5" />
<rect x="1928" y="1640.1" width="169" height="45" fill="#2a5a8a" rx="5" />
<text x="380" y="1672.6" font-size="27" fill="#fff" text-anchor="start" font-weight="normal" >DE</text>
<text x="555" y="1672.6" font-size="27" fill="#fff" text-anchor="start" font-weight="normal" >NYSE</text>
<text x="831.6" y="1672.6" font-size="27" fill="#fff" text-anchor="end" font-weight="normal" >1</text>
<text x="982" y="1672.6" font-size="27" fill="#fff" text-anchor="end" font-weight="normal" >156.24</text>
<text x="1134" y="1672.6" font-size="27" fill="#fff" text-anchor="end" font-weight="normal" >157.85</text>
<text x="1267" y="1672.6" font-size="27" fill="#fff" text-anchor="end" font-weight="normal" >1</text>
<text x="1416" y="1672.6" font-size="27" fill="#fff" text-anchor="end" font-weight="normal" >157.15</text>
<text x="1547" y="1672.6" font-size="27" fill="#fff" text-anchor="end" font-weight="normal" >310328</text>
<text x="1761" y="1672.6" font-size="27" fill="#fff" text-anchor="end" font-weight="normal" >13:15:18</text>
<text x="1915" y="1672.6" font-size="27" fill="#fff" text-anchor="end" font-weight="normal" >3.44</text>
<text x="2090" y="1672.6" font-size="27" fill="#fff" text-anchor="end" font-weight="normal" >2.24%</text>
<text x="2241" y="1672.6" font-size="27" fill="#fff" text-anchor="end" font-weight="normal" >158.25</text>
<text x="2393" y="1672.6" font-size="27" fill="#fff" text-anchor="end" font-weight="normal" >152.12</text>
<rect x="372" y="1686.3" width="2448" height="48.2" fill="#212121" rx="0" />
<rect x="1776" y="1688.3" width="147" height="45" fill="#2a5a8a" rx="5" />
<rect x="1928" y="1688.3" width="169" height="45" fill="#2a5a8a" rx="5" />
<text x="380" y="1720.8" font-size="27" fill="#fff" text-anchor="start" font-weight="normal" >FCX</text>
<text x="555" y="1720.8" font-size="27" fill="#fff" text-anchor="start" font-weight="normal" >NYSE</text>
<text x="831.6" y="1720.8" font-size="27" fill="#fff" text-anchor="end" font-weight="normal" >1</text>
<text x="982" y="1720.8" font-size="27" fill="#fff" text-anchor="end" font-weight="normal" >11.52</text>
<text x="1134" y="1720.8" font-size="27" fill="#fff" text-anchor="end" font-weight="normal" >11.56</text>
<text x="1267" y="1720.8" font-size="27" fill="#fff" text-anchor="end" font-weight="normal" >6</text>
<text x="1416" y="1720.8" font-size="27" fill="#fff" text-anchor="end" font-weight="normal" >11.56</text>
<text x="1547" y="1720.8" font-size="27" fill="#fff" text-anchor="end" font-weight="normal" >1K</text>
<text x="1761" y="1720.8" font-size="27" fill="#fff" text-anchor="end" font-weight="normal" >13:15:01</text>
<text x="1915" y="1720.8" font-size="27" fill="#fff" text-anchor="end" font-weight="normal" >0.52</text>
<text x="2090" y="1720.8" font-size="27" fill="#fff" text-anchor="end" font-weight="normal" >4.71%</text>
<text x="2241" y="1720.8" font-size="27" fill="#fff" text-anchor="end" font-weight="normal" >11.68</text>
<text x="2393" y="1720.8" font-size="27" fill="#fff" text-anchor="end" font-weight="normal" >11.03</text>
<rect x="2820" y="1493" width="32" height="238" fill="#1c1c1c" rx="0" />
<rect x="2826" y="1502" width="20" height="30" fill="#888" rx="7" />
<rect x="0" y="1734" width="2854" height="48" fill="#1e1e1e" rx="0" />
<rect x="0" y="1734" width="167" height="48" fill="#555555" rx="0" />
<path d="M9,1749 L9,1770 L40,1770" fill="none" stroke="#ececec" stroke-width="2.2" />
<rect x="15" y="1757" width="3.5" height="10" fill="#ececec" rx="0" />
<rect x="21" y="1753" width="3.5" height="14" fill="#ececec" rx="0" />
<rect x="27" y="1759" width="3.5" height="8" fill="#ececec" rx="0" />
<rect x="33" y="1751" width="3.5" height="16" fill="#ececec" rx="0" />
<text x="48" y="1768" font-size="28" fill="#fff" text-anchor="start" font-weight="normal" >Home</text>
<path d="M137,1752 L153,1768 M153,1752 L137,1768" fill="none" stroke="#e8e8e8" stroke-width="3.2" />
<path d="M176,1749 L176,1770 L207,1770" fill="none" stroke="#ececec" stroke-width="2.2" />
<rect x="182" y="1757" width="3.5" height="10" fill="#ececec" rx="0" />
<rect x="188" y="1753" width="3.5" height="14" fill="#ececec" rx="0" />
<rect x="194" y="1759" width="3.5" height="8" fill="#ececec" rx="0" />
<rect x="200" y="1751" width="3.5" height="16" fill="#ececec" rx="0" />
<text x="216" y="1768" font-size="28" fill="#fff" text-anchor="start" font-weight="normal" >Charts</text>
<circle cx="358" cy="1753" r="7" fill="#f5b942"/><path d="M350,1770 Q350,1761 360,1760 L364,1768 Z" fill="#f5b942"/>
<circle cx="369" cy="1754" r="7.5" fill="#ececec" stroke="#1e1e1e" stroke-width="1.5"/><path d="M356,1773 Q357,1762 369,1762 Q381,1762 382,1773 Z" fill="#ececec" stroke="#1e1e1e" stroke-width="1.5"/>
<text x="390" y="1768" font-size="28" fill="#fff" text-anchor="start" font-weight="normal" >Account</text>
<rect x="552" y="1756.8" width="24" height="3.6" fill="#f0f0f0" rx="0" />
<rect x="562.2" y="1747" width="3.6" height="24" fill="#f0f0f0" rx="0" />
<rect x="2711" y="1744" width="27" height="5" fill="#ececec" rx="0" />
<rect x="2711" y="1751" width="7" height="21" fill="#ececec" rx="0" />
<rect x="2720" y="1751" width="18" height="21" fill="#ececec" rx="0" />
<path d="M2761,1742 L2775,1742 L2781,1748 L2781,1768 L2761,1768 Z" fill="#ececec" stroke="none" stroke-width="2" />
<path d="M2775,1742 L2775,1748 L2781,1748" fill="none" stroke="#1e1e1e" stroke-width="1.5" />
<path d="M2777,1754 L2786,1754 L2792,1760 L2792,1774 L2777,1774 Z" fill="#ececec" stroke="#1e1e1e" stroke-width="1.5" />
<path d="M2839.3,1755.7 L2843.9,1755.9 L2843.9,1760.1 L2839.3,1760.3 L2837.6,1764.4 L2840.7,1767.8 L2837.8,1770.7 L2834.4,1767.6 L2830.3,1769.3 L2830.1,1773.9 L2825.9,1773.9 L2825.7,1769.3 L2821.6,1767.6 L2818.2,1770.7 L2815.3,1767.8 L2818.4,1764.4 L2816.7,1760.3 L2812.1,1760.1 L2812.1,1755.9 L2816.7,1755.7 L2818.4,1751.6 L2815.3,1748.2 L2818.2,1745.3 L2821.6,1748.4 L2825.7,1746.7 L2825.9,1742.1 L2830.1,1742.1 L2830.3,1746.7 L2834.4,1748.4 L2837.8,1745.3 L2840.7,1748.2 L2837.6,1751.6 Z" fill="#ececec" stroke="none" stroke-width="2" />
<circle cx="2828" cy="1758" r="11.52" fill="#ececec"/><circle cx="2828" cy="1758" r="5.28" fill="#1e1e1e"/>
<path d="M0,1782 L2854,1782 L2854,1820 A10,10 0 0 1 2844,1830 L10,1830 A10,10 0 0 1 0,1820 Z" fill="#2a5780" stroke="none" stroke-width="2" />
<path d="M23.9,1810.6 A8.9,8.9 0 0 1 38.2,1810.6" fill="none" stroke="#a8d8e8" stroke-width="4.6" />
<path d="M17.8,1804.4 A18.35,18.35 0 0 1 44,1804.4" fill="none" stroke="#a8d8e8" stroke-width="4.6" />
<path d="M11.9,1798 A28,28 0 0 1 50.1,1798" fill="none" stroke="#a8d8e8" stroke-width="4.6" />
<circle cx="30.9" cy="1815.8" r="2.3" fill="#a8d8e8"/>
<path d="M77.20000000000005,1800.4 L81.79999999999995,1795.8 A4.5,4.5 0 0 1 88.20000000000005,1802.2 L83.59999999999991,1806.8" fill="none" stroke="#e8e8e8" stroke-width="3.2" />
<path d="M80.79999999999995,1809.6 L76.20000000000005,1814.2 A4.5,4.5 0 0 1 69.79999999999995,1807.8 L74.40000000000009,1803.2" fill="none" stroke="#e8e8e8" stroke-width="3.2" />
<path d="M75,1792 L75,1797.8 M66,1800.9 L72,1800.9 M83,1812 L83,1817.6 M86,1809 L92,1809" fill="none" stroke="#9a9a9a" stroke-width="2" />
<path d="M68,1794 L72.70000000000005,1798.7 M85.29999999999995,1811 L89.70000000000005,1815.6" fill="none" stroke="#e8e8e8" stroke-width="1.3" />
<g transform="translate(116,1806) rotate(-45)"><rect x="-17" y="-5.2" width="20.5" height="10.4" rx="5.2" fill="none" stroke="#f4f4f4" stroke-width="3.4"/><rect x="-3.5" y="-5.2" width="20.5" height="10.4" rx="5.2" fill="none" stroke="#f4f4f4" stroke-width="3.4"/></g>
<circle cx="152" cy="1806" r="12" fill="#cc1919"/>
<circle cx="188" cy="1806" r="12" fill="#7fae5c"/>
<circle cx="224" cy="1806" r="12" fill="#4a86d8"/>
<circle cx="260" cy="1806" r="12" fill="#fdc32e"/>
<circle cx="296" cy="1806" r="12" fill="#ef7e04"/>
<rect x="2429" y="1788" width="170" height="35.5" fill="#fff" rx="0" />
<rect x="2429" y="1788" width="143" height="35.5" fill="#9fcf34" rx="0" />
<text x="2433" y="1815" font-size="22" fill="#000" text-anchor="start" font-weight="normal" >227M of 269M</text>
<path d="M2608,1800 L2630,1800" fill="none" stroke="#f5b942" stroke-width="3" />
<rect x="2614" y="1793" width="10" height="6" fill="none" rx="1" stroke="#f5b942" stroke-width="2"/>
<path d="M2610,1804 L2628,1804 L2626,1820 L2612,1820 Z" fill="#ececec" stroke="none" stroke-width="2" />
<rect x="2614" y="1807" width="2" height="10" fill="#2a5780" rx="0" />
<rect x="2618" y="1807" width="2" height="10" fill="#2a5780" rx="0" />
<rect x="2622" y="1807" width="2" height="10" fill="#2a5780" rx="0" />
<text x="2842.5" y="1816" font-size="28" fill="#fff" text-anchor="end" font-weight="normal" >Jun-30 13:15:23</text></svg></body></html>
